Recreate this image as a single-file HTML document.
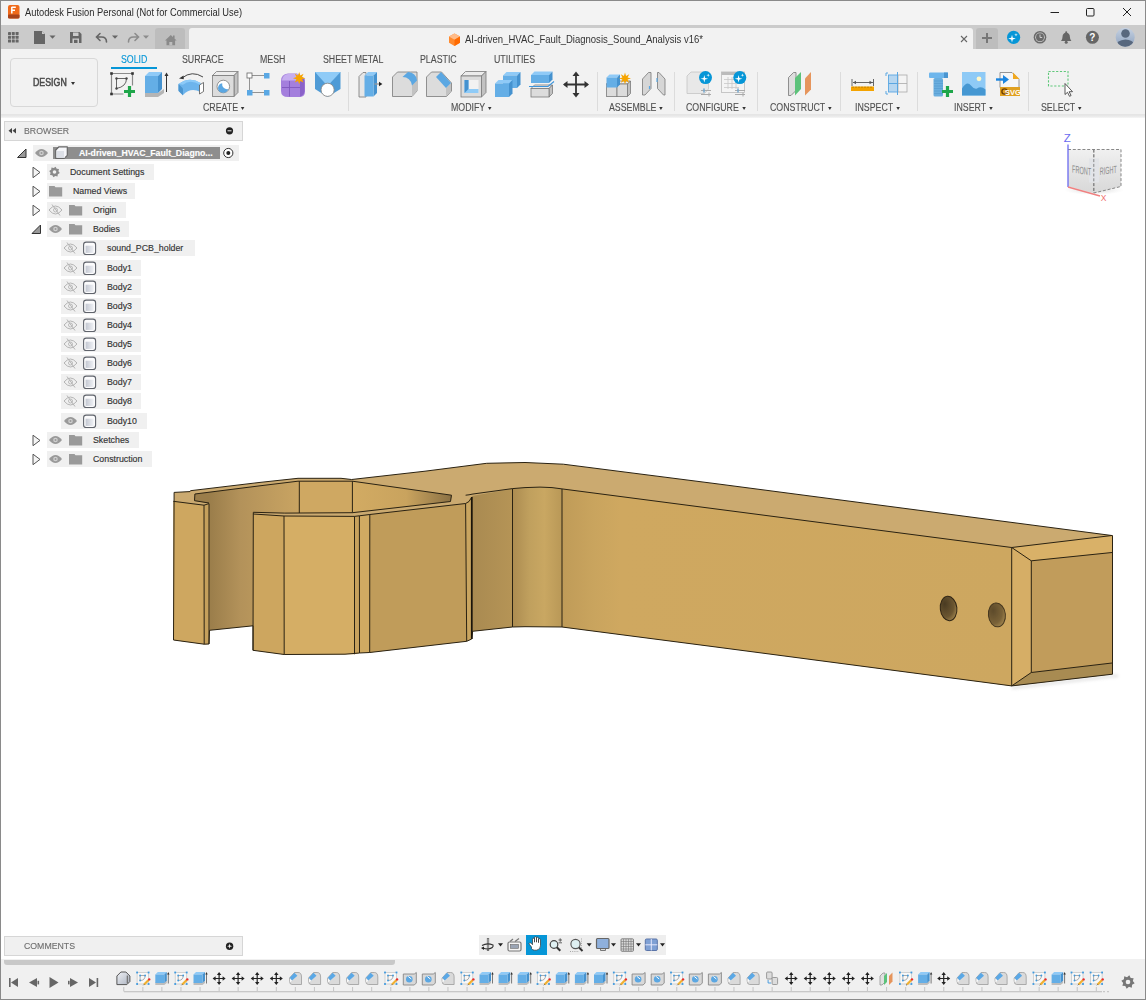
<!DOCTYPE html>
<html><head><meta charset="utf-8">
<style>
*{box-sizing:border-box;margin:0;padding:0}
html,body{width:1146px;height:1000px;overflow:hidden;background:#fff;font-family:"Liberation Sans",sans-serif}
.a{position:absolute}
#frame{position:absolute;left:0;top:0;width:1146px;height:1000px;border:1px solid #8a8a8a;pointer-events:none;z-index:50}
#title{left:0;top:0;width:1146px;height:25px;background:#f3f3f3}
#tabbar{left:0;top:25px;width:1146px;height:24px;background:#cbcbcb}
#toolbar{left:0;top:49px;width:1146px;height:69px;background:linear-gradient(to bottom,#f2f2f2 0,#f2f2f2 65px,#e4e4e4 65px,#e8e8e8 67px,#f6f6f6 69px)}
.lbl{position:absolute;font-size:10px;transform:scaleX(0.88);transform-origin:0 0;color:#505050;white-space:nowrap;line-height:10px;-webkit-text-stroke:0.12px currentColor}
.tab{position:absolute;font-size:10px;transform:scaleX(0.88);transform-origin:0 0;color:#505050;white-space:nowrap;line-height:10px;top:55px;-webkit-text-stroke:0.12px currentColor}
.sep{position:absolute;top:72px;width:1px;height:39px;background:#dcdcdc}
.dd{display:inline-block;width:0;height:0;border-left:2.9px solid transparent;border-right:2.9px solid transparent;border-top:3.2px solid #333;margin-left:3.5px;position:relative;top:-1.5px;-webkit-text-stroke:0}
.row{position:absolute;height:16px;background:#f0f0f0}
.rt{position:absolute;font-size:8.8px;color:#333;white-space:nowrap;line-height:10px;-webkit-text-stroke:0.15px currentColor}
.tri{position:absolute;width:10px;height:12px}
</style></head><body>
<div id="frame"></div>
<!-- title bar -->
<div class="a" id="title"></div>
<div class="a" style="left:25px;top:6.5px;font-size:10.3px;transform:scaleX(0.905);transform-origin:0 0;color:#2a2a2a;white-space:nowrap;line-height:12px">Autodesk Fusion Personal (Not for Commercial Use)</div>
<!-- tab bar -->
<div class="a" id="tabbar"></div>
<div class="a" style="left:155px;top:28px;width:30px;height:21px;background:#bdbdbd;border-radius:3px 3px 0 0"></div>
<div class="a" style="left:189px;top:28px;width:784px;height:21px;background:#f2f2f2;border-radius:3px 3px 0 0"></div>
<div class="a" style="left:976px;top:28px;width:22px;height:21px;background:#bdbdbd;border-radius:3px 3px 0 0"></div>
<div class="a" style="left:465px;top:34px;font-size:10.3px;transform:scaleX(0.925);transform-origin:0 0;color:#333;white-space:nowrap;line-height:12px">AI-driven_HVAC_Fault_Diagnosis_Sound_Analysis v16*</div>
<!-- toolbar -->
<div class="a" id="toolbar"></div>
<div class="a" style="left:10px;top:58px;width:88px;height:49px;border:1px solid #d8d8d8;border-radius:4px;background:#f2f2f2"></div>
<div class="lbl" style="left:33.3px;top:78px;color:#4a4a4a;-webkit-text-stroke:0.5px #4a4a4a;">DESIGN</div><div class="a" style="left:71px;top:81.5px;width:0;height:0;border-left:2.5px solid transparent;border-right:2.5px solid transparent;border-top:3.5px solid #333"></div>
<div class="tab" style="left:121px;color:#0696d7">SOLID</div>
<div class="a" style="left:111px;top:67px;width:46px;height:2px;background:#0696d7"></div>
<div class="tab" style="left:182px">SURFACE</div>
<div class="tab" style="left:260px">MESH</div>
<div class="tab" style="left:323px">SHEET METAL</div>
<div class="tab" style="left:420px">PLASTIC</div>
<div class="tab" style="left:494px">UTILITIES</div>
<div class="lbl" style="left:203px;top:103px">CREATE<span class="dd"></span></div>
<div class="lbl" style="left:451px;top:103px">MODIFY<span class="dd"></span></div>
<div class="lbl" style="left:609px;top:103px">ASSEMBLE<span class="dd"></span></div>
<div class="lbl" style="left:686px;top:103px">CONFIGURE<span class="dd"></span></div>
<div class="lbl" style="left:770px;top:103px">CONSTRUCT<span class="dd"></span></div>
<div class="lbl" style="left:855px;top:103px">INSPECT<span class="dd"></span></div>
<div class="lbl" style="left:954px;top:103px">INSERT<span class="dd"></span></div>
<div class="lbl" style="left:1041px;top:103px">SELECT<span class="dd"></span></div>
<div class="sep" style="left:348px"></div>
<div class="sep" style="left:597px"></div>
<div class="sep" style="left:674px"></div>
<div class="sep" style="left:757px"></div>
<div class="sep" style="left:840px"></div>
<div class="sep" style="left:917px"></div>
<div class="sep" style="left:1028px"></div>
<svg class="a" style="left:0;top:0;z-index:5" width="1146" height="120" viewBox="0 0 1146 120">
<rect x="8" y="5" width="11.5" height="13.5" rx="2" fill="#f06a1a"/>
<rect x="8" y="14.5" width="11.5" height="4" rx="1" fill="#a8431a"/>
<path d="M11.6,7.2 h4.2 M11.8,7 v6.6 M11.8,10.2 h3.2" stroke="#fff" stroke-width="1.5" fill="none"/>
<path d="M1050.5,12.5 h8.5" stroke="#222" stroke-width="1"/>
<rect x="1086.5" y="8.5" width="7.5" height="7.5" rx="1" fill="none" stroke="#222" stroke-width="1"/>
<path d="M1123,8 l8,8 M1131,8 l-8,8" stroke="#222" stroke-width="1"/>
<rect x="8.0" y="32.0" width="3" height="3" rx="0.4" fill="#666"/>
<rect x="8.0" y="35.8" width="3" height="3" rx="0.4" fill="#666"/>
<rect x="8.0" y="39.6" width="3" height="3" rx="0.4" fill="#666"/>
<rect x="11.8" y="32.0" width="3" height="3" rx="0.4" fill="#666"/>
<rect x="11.8" y="35.8" width="3" height="3" rx="0.4" fill="#666"/>
<rect x="11.8" y="39.6" width="3" height="3" rx="0.4" fill="#666"/>
<rect x="15.6" y="32.0" width="3" height="3" rx="0.4" fill="#666"/>
<rect x="15.6" y="35.8" width="3" height="3" rx="0.4" fill="#666"/>
<rect x="15.6" y="39.6" width="3" height="3" rx="0.4" fill="#666"/>
<path d="M34,31 h8 l3,3 v10 h-11 z" fill="#666"/><path d="M42,31 v3 h3" fill="#cbcbcb"/>
<path d="M49.5,35.5 h6 l-3,3.2 z" fill="#666"/>
<path d="M70,32 h9.5 l2,2 v9 h-11.5 z" fill="#666"/><rect x="73" y="32.5" width="5.5" height="3.5" fill="#cbcbcb"/><rect x="72.5" y="38.5" width="6.5" height="4.5" fill="#cbcbcb"/><rect x="74" y="39.8" width="3.5" height="3.2" fill="#666"/>
<path d="M106.5,42 q0,-5 -5,-5 h-4.5 M100,33.5 l-3.5,3.5 l3.5,3.5" stroke="#666" stroke-width="1.6" fill="none" stroke-linecap="round"/>
<path d="M112,35.5 h6 l-3,3.2 z" fill="#666"/>
<path d="M128.5,42 q0,-5 5,-5 h4.5 M135,33.5 l3.5,3.5 l-3.5,3.5" stroke="#8c8c8c" stroke-width="1.6" fill="none" stroke-linecap="round"/>
<path d="M143,35.5 h6 l-3,3.2 z" fill="#8c8c8c"/>
<path d="M165,40.5 l5.8,-5.5 l5.8,5.5 h-1.5 v4.8 h-8.6 v-4.8 z" fill="#8a8a8a"/><rect x="173" y="35.5" width="1.6" height="3" fill="#8a8a8a"/><rect x="169.3" y="42" width="3" height="3.3" fill="#bdbdbd"/>
<polygon points="454.5,33.5 460,36.6 460,42.8 454.5,46 449,42.8 449,36.6" fill="#ff8a2e"/>
<polygon points="454.5,33.5 460,36.6 454.5,39.7 449,36.6" fill="#ffbb88"/>
<polygon points="460,36.6 460,42.8 454.5,46 454.5,39.7" fill="#ff6a00"/>
<path d="M961,36 l6,6 M967,36 l-6,6" stroke="#666" stroke-width="1.1"/>
<path d="M987,33 v10 M982,38 h10" stroke="#777" stroke-width="2"/>
<circle cx="1013.6" cy="37.3" r="6.6" fill="#0696d7"/>
<polygon points="1012.00,34.80 1012.78,37.82 1015.80,38.60 1012.78,39.38 1012.00,42.40 1011.22,39.38 1008.20,38.60 1011.22,37.82" fill="#fff"/><polygon points="1016.00,33.00 1016.39,34.41 1017.80,34.80 1016.39,35.19 1016.00,36.60 1015.61,35.19 1014.20,34.80 1015.61,34.41" fill="#fff"/>
<circle cx="1040" cy="37.3" r="6.3" fill="#6a6a6a"/><circle cx="1040" cy="37.3" r="4.8" fill="#cbcbcb"/><circle cx="1040" cy="37.3" r="4" fill="#6a6a6a"/><path d="M1040,34.5 v3 h2.2" stroke="#cbcbcb" stroke-width="1" fill="none"/>
<path d="M1061,41 q1.5,-1.5 1.5,-4 q0,-4 3.7,-4.6 q3.7,0.6 3.7,4.6 q0,2.5 1.5,4 z" fill="#666"/><circle cx="1066.2" cy="32.3" r="1" fill="#666"/><circle cx="1066.2" cy="42.3" r="1.5" fill="#666"/>
<circle cx="1092.4" cy="37.3" r="6.5" fill="#666"/><text x="1092.4" y="41.3" font-size="10" font-weight="bold" fill="#fff" text-anchor="middle" font-family="Liberation Sans">?</text>
<defs><linearGradient id="gAv" x1="0" y1="0" x2="0" y2="1"><stop offset="0" stop-color="#c6d2e2"/><stop offset="1" stop-color="#8fa3c0"/></linearGradient><clipPath id="cAv"><circle cx="1125.2" cy="37.2" r="9.5"/></clipPath></defs>
<circle cx="1125.2" cy="37.2" r="9.5" fill="url(#gAv)"/><g clip-path="url(#cAv)"><circle cx="1125.5" cy="33.5" r="4.3" fill="#58687e"/><path d="M1115,48 q1,-8 10.5,-8.5 q9.5,0.5 10.5,8.5 z" fill="#58687e"/></g>
<path d="M111.5,73.5 h21 v12 M111.5,73.5 v20.5 h12" stroke="#8a8a8a" stroke-width="1.2" fill="none"/>
<rect x="110.2" y="72.2" width="2.6" height="2.6" fill="#333"/>
<rect x="131.2" y="72.2" width="2.6" height="2.6" fill="#333"/>
<rect x="110.2" y="92.7" width="2.6" height="2.6" fill="#333"/>
<path d="M116.5,78.5 h10 M116.5,78.5 v10 M126.5,78.5 q0,8 -10,10" stroke="#555" stroke-width="0.9" fill="none"/>
<circle cx="116.5" cy="78.5" r="1.2" fill="#444"/>
<circle cx="126.5" cy="78.5" r="1.2" fill="#444"/>
<circle cx="116.5" cy="88.5" r="1.2" fill="#444"/>
<path d="M129.5,86 v11 M124,91.5 h11" stroke="#1ea64a" stroke-width="3.2"/>
<polygon points="145,93 158,93 164,89 164,93 158,97 145,97" fill="#b5b5b5"/>
<polygon points="145,76 149,72 162,72 158,76" fill="#8fcaf7"/><polygon points="158,76 162,72 162,89 158,93" fill="#4592cf"/><rect x="145" y="76" width="13" height="17" fill="#64aee6"/>
<path d="M166.5,92 v-18" stroke="#333" stroke-width="1"/><path d="M164.5,76 l2,-3.5 l2,3.5 z" fill="#333"/>
<path d="M182,78 q10,-8 21,-1" stroke="#333" stroke-width="0.9" fill="none"/><path d="M179,78.5 l4.5,-3 l0.3,3.8 z" fill="#333"/>
<path d="M178.5,84 q11,-8 22,-1 v9 q-10,-5 -17.5,3 l-4.5,-4.5 z" fill="#6db4ec"/>
<path d="M178.5,84 q11,-8 22,-1 l-0.5,1.8 q-10,-6 -17,0 z" fill="#8ccaf8"/>
<path d="M178.5,84 l4.5,4.5 v7 l-4.5,-4.5 z" fill="#4a95d0"/>
<polygon points="199.5,85 203.5,82.5 203.5,91.5 199.5,94" fill="#fff" stroke="#555" stroke-width="0.8"/>
<polygon points="212.5,75.5 216.5,71.5 238.0,71.5 234.0,75.5" fill="#ececec" stroke="#7a7a7a" stroke-width="0.8"/><polygon points="234.0,75.5 238.0,71.5 238.0,92.5 234.0,96.5" fill="#c2c2c2" stroke="#7a7a7a" stroke-width="0.8"/><rect x="212.5" y="75.5" width="21.5" height="21" fill="#dcdcdc" stroke="#7a7a7a" stroke-width="0.8"/>
<circle cx="223.3" cy="86.5" r="6.3" fill="#fff" stroke="#888" stroke-width="0.9"/><path d="M218,88 a5.2,5.2 0 0 0 10.2,1 a5,5 0 0 1 -6,-5.8 a5.2,5.2 0 0 0 -4.2,4.8 z" fill="#5ba7e2"/>
<path d="M252,75.5 h12 M249.5,78 v12 M252,92.5 h12" stroke="#888" stroke-width="0.9"/>
<rect x="247" y="73" width="5" height="5" fill="#fff" stroke="#666" stroke-width="0.8"/>
<rect x="264" y="73" width="5.5" height="5.5" fill="#5aa8e4"/>
<rect x="247" y="90" width="5.5" height="5.5" fill="#5aa8e4"/>
<rect x="264" y="90" width="5.5" height="5.5" fill="#5aa8e4"/>
<path d="M281,81 q0,-7 7,-7.5 h9 l6,4 q2,2 2,5 v9 q0,5 -5,5.5 h-12 q-7,0 -7,-6 z" fill="#a47fdd"/>
<path d="M282,80 q1,-5.5 6,-6 h9 l5,3.5 l-5,3 h-15 z" fill="#c6aef0"/>
<path d="M300,80.5 l4.5,-2.5 v13 q0,3 -3,5 l-1.5,0.5 z" fill="#8a62c9"/>
<path d="M282,87.5 h18 M289.5,81 v15.5" stroke="#7f58bd" stroke-width="0.9"/>
<polygon points="299.20,72.00 300.35,75.43 303.58,73.82 301.97,77.05 305.40,78.20 301.97,79.35 303.58,82.58 300.35,80.97 299.20,84.40 298.05,80.97 294.82,82.58 296.43,79.35 293.00,78.20 296.43,77.05 294.82,73.82 298.05,75.43" fill="#f6a400"/>
<polygon points="315,72 340.5,72 340.5,89 327.5,97 315,89" fill="#4f9bd6"/>
<polygon points="315,72 340.5,72 327.5,86" fill="#8fcbf7"/>
<circle cx="327.6" cy="89.8" r="6.6" fill="#fff" stroke="#8a8a8a" stroke-width="0.9"/>
<path d="M359,97 v-20.5 l4,-4 h3 v24.5 z" fill="#e6e6e6" stroke="#777" stroke-width="0.8"/>
<polygon points="364.5,75.5 368.0,72 377.0,72 373.5,75.5" fill="#8fcaf7"/><polygon points="373.5,75.5 377.0,72 377.0,93 373.5,96.5" fill="#4592cf"/><rect x="364.5" y="75.5" width="9" height="21" fill="#64aee6"/>
<path d="M374.5,84 h5" stroke="#999" stroke-width="1.3"/><path d="M379,81.8 l3.4,2.2 l-3.4,2.2 z" fill="#222"/>
<path d="M392.5,96.5 v-19.5 l5,-5 h13 v0 l6.5,0 v19 l-5,5.5 z" fill="#dcdcdc" stroke="#7a7a7a" stroke-width="0.8"/>
<polygon points="412,96.5 417,91 417,80 412,85" fill="#c2c2c2"/>
<path d="M402.5,77 q8,0 9.5,8.5 l5,-5 q-1,-8 -9,-8.5 z" fill="#5ba7e2"/>
<path d="M426.5,96.5 v-19.5 l5,-5 h10 l10,11 v8 l-5,5.5 z" fill="#dcdcdc" stroke="#7a7a7a" stroke-width="0.8"/>
<polygon points="446,96.5 451,91 451,83 446,88" fill="#c2c2c2"/>
<polygon points="436,77 441,72 451,83 446,88" fill="#5ba7e2"/>
<polygon points="461,76.0 465.5,71.5 486.0,71.5 481.5,76.0" fill="#ececec" stroke="#7a7a7a" stroke-width="0.8"/><polygon points="481.5,76.0 486.0,71.5 486.0,92.5 481.5,97.0" fill="#c2c2c2" stroke="#7a7a7a" stroke-width="0.8"/><rect x="461" y="76.0" width="20.5" height="21" fill="#dcdcdc" stroke="#7a7a7a" stroke-width="0.8"/>
<rect x="464.5" y="80" width="14" height="13" fill="#f2f2f2"/>
<polygon points="464.5,80 468.5,80 468.5,89 478.5,89 478.5,93 464.5,93" fill="#8fcbf7"/><polygon points="464.5,80 468.5,80 468.5,89 464.5,93" fill="#4592cf"/>
<polygon points="503,75.5 506.5,72 520.5,72 517,75.5" fill="#8fcaf7"/><polygon points="517,75.5 520.5,72 520.5,84.5 517,88.0" fill="#4592cf"/><rect x="503" y="75.5" width="14" height="12.5" fill="#64aee6"/>
<polygon points="495,83.5 498.5,80 512.5,80 509,83.5" fill="#8fcaf7"/><polygon points="509,83.5 512.5,80 512.5,93.5 509,97.0" fill="#4592cf"/><rect x="495" y="83.5" width="14" height="13.5" fill="#64aee6"/>
<polygon points="531,75.0 534.5,71.5 552.5,71.5 549,75.0" fill="#8fcaf7"/><polygon points="549,75.0 552.5,71.5 552.5,79.5 549,83.0" fill="#4592cf"/><rect x="531" y="75.0" width="18" height="8" fill="#64aee6"/>
<polygon points="531,88.5 534.5,85 552.5,85 549,88.5" fill="#ececec" stroke="#7a7a7a" stroke-width="0.8"/><polygon points="549,88.5 552.5,85 552.5,93.5 549,97.0" fill="#c2c2c2" stroke="#7a7a7a" stroke-width="0.8"/><rect x="531" y="88.5" width="18" height="8.5" fill="#dcdcdc" stroke="#7a7a7a" stroke-width="0.8"/>
<path d="M529,86.5 h19 l6,-5" stroke="#3d95dc" stroke-width="1.1" fill="none"/>
<path d="M576,73 v23 M564.5,84.5 h23" stroke="#333" stroke-width="1.8"/>
<polygon points="576,71.5 572.5,76 579.5,76" fill="#333"/>
<polygon points="576,97.5 572.5,93 579.5,93" fill="#333"/>
<polygon points="563,84.5 567.5,81 567.5,88" fill="#333"/>
<polygon points="589,84.5 584.5,81 584.5,88" fill="#333"/>
<polygon points="606.5,84 609.5,81 620.0,81 617.0,84" fill="#ececec" stroke="#7a7a7a" stroke-width="0.8"/><polygon points="617.0,84 620.0,81 620.0,93.5 617.0,96.5" fill="#c2c2c2" stroke="#7a7a7a" stroke-width="0.8"/><rect x="606.5" y="84" width="10.5" height="12.5" fill="#dcdcdc" stroke="#7a7a7a" stroke-width="0.8"/>
<polygon points="617,84 620,81 630.5,81 627.5,84" fill="#ececec" stroke="#7a7a7a" stroke-width="0.8"/><polygon points="627.5,84 630.5,81 630.5,93.5 627.5,96.5" fill="#c2c2c2" stroke="#7a7a7a" stroke-width="0.8"/><rect x="617" y="84" width="10.5" height="12.5" fill="#dcdcdc" stroke="#7a7a7a" stroke-width="0.8"/>
<polygon points="606.5,77.5 609.5,74.5 620.0,74.5 617.0,77.5" fill="#8fcaf7"/><polygon points="617.0,77.5 620.0,74.5 620.0,84.5 617.0,87.5" fill="#4592cf"/><rect x="606.5" y="77.5" width="10.5" height="10" fill="#64aee6"/>
<polygon points="625.00,72.50 626.07,75.91 629.24,74.26 627.59,77.43 631.00,78.50 627.59,79.57 629.24,82.74 626.07,81.09 625.00,84.50 623.93,81.09 620.76,82.74 622.41,79.57 619.00,78.50 622.41,77.43 620.76,74.26 623.93,75.91" fill="#f6a400"/>
<path d="M642.5,95 v-16 l6,-6.5 h2.5 v16 l-6,6.5 z" fill="#d6d6d6" stroke="#777" stroke-width="0.8"/>
<path d="M665,95 v-16 l-6,-6.5 h-1.5 v16 l6,6.5 z" fill="#d6d6d6" stroke="#777" stroke-width="0.8"/>
<path d="M649.5,86 v3 M657,78 v4" stroke="#5ba7e2" stroke-width="1.2"/>
<path d="M687,93.5 v-17.5 l4,-4 h17.5 v17 l-4,4.5 z" fill="#e8e8e8" stroke="#c4c4c4" stroke-width="0.8"/>
<path d="M701,90.5 h10 M701,94.5 h10 M704,88.5 v4 M709,92.5 v4" stroke="#aaa" stroke-width="1"/><path d="M704,88.5 v4" stroke="#5ba7e2" stroke-width="1"/>
<circle cx="705.5" cy="77.6" r="6.5" fill="#0696d7"/><polygon points="704.30,75.00 705.08,78.02 708.10,78.80 705.08,79.58 704.30,82.60 703.52,79.58 700.50,78.80 703.52,78.02" fill="#fff"/><polygon points="708.20,73.40 708.59,74.81 710.00,75.20 708.59,75.59 708.20,77.00 707.81,75.59 706.40,75.20 707.81,74.81" fill="#fff"/>
<rect x="721.5" y="72" width="23" height="20.5" fill="#f4f4f4" stroke="#bbb" stroke-width="0.8"/><rect x="721.5" y="72" width="23" height="3" fill="#bbb"/>
<path d="M724,79.5 h15 M724,83.5 h15 M724,87.5 h15 M728,77 v12 M732,77 v12 M736,77 v12" stroke="#c8c8c8" stroke-width="0.8"/>
<path d="M735,90.5 h10 M735,94.5 h10 M738,88.5 v4 M743,92.5 v4" stroke="#aaa" stroke-width="1"/><path d="M738,88.5 v4" stroke="#5ba7e2" stroke-width="1"/>
<circle cx="739.8" cy="77.6" r="6.5" fill="#0696d7"/><polygon points="738.60,75.00 739.38,78.02 742.40,78.80 739.38,79.58 738.60,82.60 737.82,79.58 734.80,78.80 737.82,78.02" fill="#fff"/><polygon points="742.50,73.40 742.89,74.81 744.30,75.20 742.89,75.59 742.50,77.00 742.11,75.59 740.70,75.20 742.11,74.81" fill="#fff"/>
<path d="M788.5,95.5 v-18 l5,-5 h2.5 v18 l-5,5 z" fill="#dedede" stroke="#777" stroke-width="0.8"/>
<polygon points="795,78 801,72 801,89 795,95.5" fill="#5cc27a"/>
<polygon points="805,78.5 811,72 811,89.5 805,95.5" fill="#e6955c"/>
<path d="M852,79 v7 M873.5,79 v7 M853,82.5 h20" stroke="#555" stroke-width="0.9"/><path d="M853,82.5 l3,-1.8 v3.6 z M872.5,82.5 l-3,-1.8 v3.6 z" fill="#555"/>
<rect x="851" y="86.5" width="23" height="4.5" fill="#f4a300"/><path d="M853,86.5 v1.5 M856,86.5 v1.5 M859,86.5 v1.5 M862,86.5 v1.5 M865,86.5 v1.5 M868,86.5 v1.5 M871,86.5 v1.5" stroke="#a46a00" stroke-width="0.7"/>
<rect x="898" y="75" width="9" height="17" fill="#f4f4f4" stroke="#aaa" stroke-width="0.8"/><path d="M898,83.5 h9" stroke="#aaa" stroke-width="0.8"/>
<rect x="888.5" y="75" width="9" height="17" fill="#b6d6f0" stroke="#5ba7e2" stroke-width="0.9"/><path d="M888.5,83.5 h9 M897.5,72 v23" stroke="#5ba7e2" stroke-width="1"/>
<path d="M888,73 h-2 v3 M888,94 h-2 v-3" stroke="#5ba7e2" stroke-width="1" fill="none"/>
<rect x="929" y="72.5" width="19" height="5.5" rx="1" fill="#6eb6ec"/><rect x="944" y="72.5" width="4" height="5.5" fill="#4a95d0"/>
<rect x="933.5" y="78" width="9.5" height="18.5" rx="1.5" fill="#6aaede"/><path d="M934,81 h9 M934,83.5 h9 M934,86 h9 M934,88.5 h9 M934,91 h9 M934,93.5 h9" stroke="#5399cf" stroke-width="0.6"/>
<path d="M947.5,86 v11 M942,91.5 h11" stroke="#1ea64a" stroke-width="3.2"/>
<rect x="962" y="72" width="23.5" height="23.5" fill="#8ecaf6"/><path d="M962,95.5 v-7 q5,-8 9,-3 q3,4 6,3 q4,-3 8.5,1 v6 z" fill="#4597d2"/><circle cx="979" cy="78.8" r="2.4" fill="#fff7c8"/>
<path d="M1000,72.5 h12 l7,7 v8 h-19 z" fill="#f6f6f6" stroke="#8a8a8a" stroke-width="0.9"/><polygon points="1013,72.5 1019.5,79 1013,79" fill="#f0a820"/>
<rect x="1000" y="87" width="20" height="9" fill="#e0a020"/><circle cx="1004.5" cy="91.5" r="2.6" fill="none" stroke="#704000" stroke-width="1.4"/><text x="1013" y="95" font-size="7.5" font-weight="bold" fill="#fff" text-anchor="middle" font-family="Liberation Sans">SVG</text>
<path d="M996,79.5 h8" stroke="#1c86e0" stroke-width="2.4"/><polygon points="1003,75 1009,79.5 1003,84" fill="#1c86e0"/>
<rect x="1048.5" y="71.5" width="19.5" height="14.5" fill="none" stroke="#5fc87a" stroke-width="1.1" stroke-dasharray="2.2,1.6"/>
<path d="M1065,83.5 v11 l2.5,-2.2 l2,4 l1.6,-0.8 l-2,-3.8 h3.4 z" fill="#fff" stroke="#333" stroke-width="0.8"/>
</svg>
<!-- browser -->
<div class="a" style="left:4px;top:121px;width:239px;height:20px;background:#f0f0f0;border:1px solid #d6d6d6"></div>
<div class="lbl" style="left:24px;top:125.5px;color:#6e6e6e;font-size:9.3px;transform:scaleX(0.94)">BROWSER</div>
<div class="row" style="left:33px;top:145px;width:206px;height:16px"></div>
<div class="a" style="left:53px;top:146.5px;width:167px;height:12.5px;background:#8e8e8e"></div>
<div class="rt" style="left:79px;top:147.5px;color:#fff;font-weight:bold;font-size:8.7px">AI-driven_HVAC_Fault_Diagno...</div>
<div class="row" style="left:47px;top:164px;height:16px;width:107px"></div>
<div class="rt" style="left:70px;top:166.5px">Document Settings</div>
<div class="row" style="left:47px;top:183px;height:16px;width:88px"></div>
<div class="rt" style="left:73px;top:185.5px">Named Views</div>
<div class="row" style="left:47px;top:202px;height:16px;width:79px"></div>
<div class="rt" style="left:93px;top:204.5px">Origin</div>
<div class="row" style="left:47px;top:221px;height:16px;width:82px"></div>
<div class="rt" style="left:93px;top:223.5px">Bodies</div>
<div class="row" style="left:61px;top:240px;height:16px;width:134px"></div>
<div class="rt" style="left:107px;top:242.5px">sound_PCB_holder</div>
<div class="row" style="left:61px;top:260px;height:16px;width:80px"></div>
<div class="rt" style="left:107px;top:262.5px">Body1</div>
<div class="row" style="left:61px;top:279px;height:16px;width:80px"></div>
<div class="rt" style="left:107px;top:281.5px">Body2</div>
<div class="row" style="left:61px;top:298px;height:16px;width:80px"></div>
<div class="rt" style="left:107px;top:300.5px">Body3</div>
<div class="row" style="left:61px;top:317px;height:16px;width:80px"></div>
<div class="rt" style="left:107px;top:319.5px">Body4</div>
<div class="row" style="left:61px;top:336px;height:16px;width:80px"></div>
<div class="rt" style="left:107px;top:338.5px">Body5</div>
<div class="row" style="left:61px;top:355px;height:16px;width:80px"></div>
<div class="rt" style="left:107px;top:357.5px">Body6</div>
<div class="row" style="left:61px;top:374px;height:16px;width:80px"></div>
<div class="rt" style="left:107px;top:376.5px">Body7</div>
<div class="row" style="left:61px;top:393px;height:16px;width:80px"></div>
<div class="rt" style="left:107px;top:395.5px">Body8</div>
<div class="row" style="left:61px;top:413px;height:16px;width:86px"></div>
<div class="rt" style="left:107px;top:415.5px">Body10</div>
<div class="row" style="left:47px;top:432px;height:16px;width:92px"></div>
<div class="rt" style="left:93px;top:434.5px">Sketches</div>
<div class="row" style="left:47px;top:451px;height:16px;width:105px"></div>
<div class="rt" style="left:93px;top:453.5px">Construction</div>
<svg class="a" style="left:0;top:0;z-index:6" width="250" height="470" viewBox="0 0 250 470">
<defs><linearGradient id="gBody" x1="0" y1="0" x2="1" y2="0"><stop offset="0" stop-color="#c4c8d2"/><stop offset="1" stop-color="#eef0f4"/></linearGradient></defs>
<circle cx="229.5" cy="130.8" r="3.6" fill="#222"/><path d="M227.5,130.8 h4" stroke="#f0f0f0" stroke-width="1"/>
<path d="M12,128 l-3.5,2.8 l3.5,2.8 z M16,128 l-3.5,2.8 l3.5,2.8 z" fill="#444"/>
<path d="M17.5,157.5 l8.5,-8.5 v8.5 z" fill="#9a9a9a" stroke="#333" stroke-width="1" stroke-linejoin="round"/>
<path d="M35,153.0 q6.5,-8 13,0 q-6.5,8 -13,0 z" fill="#9a9a9a"/><circle cx="41.5" cy="153.0" r="2.3" fill="#cfcfcf"/><circle cx="41.5" cy="153.0" r="1" fill="#9a9a9a"/>
<path d="M55.7,150 L59,146.8 H67.3 V155.3 L64.2,158.4 H55.7 Z" fill="#f6f7fa" stroke="#666" stroke-width="1.2" stroke-linejoin="round"/><rect x="56.6" y="151" width="7.4" height="6.8" fill="#dde0e7"/><path d="M64.6,150.6 v7.3" stroke="#f4f4f8" stroke-width="0.8"/>
<circle cx="228.3" cy="153" r="4.6" fill="#fff" stroke="#333" stroke-width="1"/><circle cx="228.3" cy="153" r="2" fill="#222"/>
<path d="M33.0,167.2 l7,5.2 l-7,5.3 z" fill="#f4f4f4" stroke="#555" stroke-width="1" stroke-linejoin="round"/>
<polygon points="59.80,173.05 57.83,174.22 57.50,176.49 55.28,175.92 53.45,177.30 52.28,175.33 50.01,175.00 50.58,172.78 49.20,170.95 51.17,169.78 51.50,167.51 53.72,168.08 55.55,166.70 56.72,168.67 58.99,169.00 58.42,171.22" fill="#8a8a8a"/><circle cx="54.5" cy="172.0" r="1.8" fill="#f0f0f0"/>
<path d="M33.0,186.2 l7,5.2 l-7,5.3 z" fill="#f4f4f4" stroke="#555" stroke-width="1" stroke-linejoin="round"/>
<path d="M49,186 h5.5 l1,1.2 h6.7 v9.2 h-13.2 z" fill="#9a9a9a"/><path d="M55,186.3 h7" stroke="#f0f0f0" stroke-width="0.6"/>
<path d="M33.0,205.2 l7,5.2 l-7,5.3 z" fill="#f4f4f4" stroke="#555" stroke-width="1" stroke-linejoin="round"/>
<path d="M49,210.0 q6.5,-8 13,0 q-6.5,8 -13,0 z" fill="none" stroke="#b4b4b4" stroke-width="1"/><circle cx="55.5" cy="210.0" r="2" fill="none" stroke="#b4b4b4" stroke-width="0.9"/><path d="M52,204.5 l8,11" stroke="#b4b4b4" stroke-width="1"/>
<path d="M69,205 h5.5 l1,1.2 h6.7 v9.2 h-13.2 z" fill="#9a9a9a"/><path d="M75,205.3 h7" stroke="#f0f0f0" stroke-width="0.6"/>
<path d="M32,233.5 l8.5,-8.5 v8.5 z" fill="#9a9a9a" stroke="#333" stroke-width="1" stroke-linejoin="round"/>
<path d="M49,229.0 q6.5,-8 13,0 q-6.5,8 -13,0 z" fill="#9a9a9a"/><circle cx="55.5" cy="229.0" r="2.3" fill="#cfcfcf"/><circle cx="55.5" cy="229.0" r="1" fill="#9a9a9a"/>
<path d="M69,224 h5.5 l1,1.2 h6.7 v9.2 h-13.2 z" fill="#9a9a9a"/><path d="M75,224.3 h7" stroke="#f0f0f0" stroke-width="0.6"/>
<path d="M64,248.0 q6.5,-8 13,0 q-6.5,8 -13,0 z" fill="none" stroke="#b4b4b4" stroke-width="1"/><circle cx="70.5" cy="248.0" r="2" fill="none" stroke="#b4b4b4" stroke-width="0.9"/><path d="M67,242.5 l8,11" stroke="#b4b4b4" stroke-width="1"/>
<rect x="83.6" y="242.1" width="12" height="12.4" rx="2.6" fill="#fbfbfc" stroke="#60646c" stroke-width="1.1"/><rect x="85.6" y="245.7" width="8" height="7.2" fill="url(#gBody)"/>
<path d="M64,268.0 q6.5,-8 13,0 q-6.5,8 -13,0 z" fill="none" stroke="#b4b4b4" stroke-width="1"/><circle cx="70.5" cy="268.0" r="2" fill="none" stroke="#b4b4b4" stroke-width="0.9"/><path d="M67,262.5 l8,11" stroke="#b4b4b4" stroke-width="1"/>
<rect x="83.6" y="262.1" width="12" height="12.4" rx="2.6" fill="#fbfbfc" stroke="#60646c" stroke-width="1.1"/><rect x="85.6" y="265.7" width="8" height="7.2" fill="url(#gBody)"/>
<path d="M64,287.0 q6.5,-8 13,0 q-6.5,8 -13,0 z" fill="none" stroke="#b4b4b4" stroke-width="1"/><circle cx="70.5" cy="287.0" r="2" fill="none" stroke="#b4b4b4" stroke-width="0.9"/><path d="M67,281.5 l8,11" stroke="#b4b4b4" stroke-width="1"/>
<rect x="83.6" y="281.1" width="12" height="12.4" rx="2.6" fill="#fbfbfc" stroke="#60646c" stroke-width="1.1"/><rect x="85.6" y="284.7" width="8" height="7.2" fill="url(#gBody)"/>
<path d="M64,306.0 q6.5,-8 13,0 q-6.5,8 -13,0 z" fill="none" stroke="#b4b4b4" stroke-width="1"/><circle cx="70.5" cy="306.0" r="2" fill="none" stroke="#b4b4b4" stroke-width="0.9"/><path d="M67,300.5 l8,11" stroke="#b4b4b4" stroke-width="1"/>
<rect x="83.6" y="300.1" width="12" height="12.4" rx="2.6" fill="#fbfbfc" stroke="#60646c" stroke-width="1.1"/><rect x="85.6" y="303.7" width="8" height="7.2" fill="url(#gBody)"/>
<path d="M64,325.0 q6.5,-8 13,0 q-6.5,8 -13,0 z" fill="none" stroke="#b4b4b4" stroke-width="1"/><circle cx="70.5" cy="325.0" r="2" fill="none" stroke="#b4b4b4" stroke-width="0.9"/><path d="M67,319.5 l8,11" stroke="#b4b4b4" stroke-width="1"/>
<rect x="83.6" y="319.1" width="12" height="12.4" rx="2.6" fill="#fbfbfc" stroke="#60646c" stroke-width="1.1"/><rect x="85.6" y="322.7" width="8" height="7.2" fill="url(#gBody)"/>
<path d="M64,344.0 q6.5,-8 13,0 q-6.5,8 -13,0 z" fill="none" stroke="#b4b4b4" stroke-width="1"/><circle cx="70.5" cy="344.0" r="2" fill="none" stroke="#b4b4b4" stroke-width="0.9"/><path d="M67,338.5 l8,11" stroke="#b4b4b4" stroke-width="1"/>
<rect x="83.6" y="338.1" width="12" height="12.4" rx="2.6" fill="#fbfbfc" stroke="#60646c" stroke-width="1.1"/><rect x="85.6" y="341.7" width="8" height="7.2" fill="url(#gBody)"/>
<path d="M64,363.0 q6.5,-8 13,0 q-6.5,8 -13,0 z" fill="none" stroke="#b4b4b4" stroke-width="1"/><circle cx="70.5" cy="363.0" r="2" fill="none" stroke="#b4b4b4" stroke-width="0.9"/><path d="M67,357.5 l8,11" stroke="#b4b4b4" stroke-width="1"/>
<rect x="83.6" y="357.1" width="12" height="12.4" rx="2.6" fill="#fbfbfc" stroke="#60646c" stroke-width="1.1"/><rect x="85.6" y="360.7" width="8" height="7.2" fill="url(#gBody)"/>
<path d="M64,382.0 q6.5,-8 13,0 q-6.5,8 -13,0 z" fill="none" stroke="#b4b4b4" stroke-width="1"/><circle cx="70.5" cy="382.0" r="2" fill="none" stroke="#b4b4b4" stroke-width="0.9"/><path d="M67,376.5 l8,11" stroke="#b4b4b4" stroke-width="1"/>
<rect x="83.6" y="376.1" width="12" height="12.4" rx="2.6" fill="#fbfbfc" stroke="#60646c" stroke-width="1.1"/><rect x="85.6" y="379.7" width="8" height="7.2" fill="url(#gBody)"/>
<path d="M64,401.0 q6.5,-8 13,0 q-6.5,8 -13,0 z" fill="none" stroke="#b4b4b4" stroke-width="1"/><circle cx="70.5" cy="401.0" r="2" fill="none" stroke="#b4b4b4" stroke-width="0.9"/><path d="M67,395.5 l8,11" stroke="#b4b4b4" stroke-width="1"/>
<rect x="83.6" y="395.1" width="12" height="12.4" rx="2.6" fill="#fbfbfc" stroke="#60646c" stroke-width="1.1"/><rect x="85.6" y="398.7" width="8" height="7.2" fill="url(#gBody)"/>
<path d="M64,421.0 q6.5,-8 13,0 q-6.5,8 -13,0 z" fill="#9a9a9a"/><circle cx="70.5" cy="421.0" r="2.3" fill="#cfcfcf"/><circle cx="70.5" cy="421.0" r="1" fill="#9a9a9a"/>
<rect x="83.6" y="415.1" width="12" height="12.4" rx="2.6" fill="#fbfbfc" stroke="#60646c" stroke-width="1.1"/><rect x="85.6" y="418.7" width="8" height="7.2" fill="url(#gBody)"/>
<path d="M33.0,435.2 l7,5.2 l-7,5.3 z" fill="#f4f4f4" stroke="#555" stroke-width="1" stroke-linejoin="round"/>
<path d="M49,440.0 q6.5,-8 13,0 q-6.5,8 -13,0 z" fill="#9a9a9a"/><circle cx="55.5" cy="440.0" r="2.3" fill="#cfcfcf"/><circle cx="55.5" cy="440.0" r="1" fill="#9a9a9a"/>
<path d="M69,435 h5.5 l1,1.2 h6.7 v9.2 h-13.2 z" fill="#9a9a9a"/><path d="M75,435.3 h7" stroke="#f0f0f0" stroke-width="0.6"/>
<path d="M33.0,454.2 l7,5.2 l-7,5.3 z" fill="#f4f4f4" stroke="#555" stroke-width="1" stroke-linejoin="round"/>
<path d="M49,459.0 q6.5,-8 13,0 q-6.5,8 -13,0 z" fill="#9a9a9a"/><circle cx="55.5" cy="459.0" r="2.3" fill="#cfcfcf"/><circle cx="55.5" cy="459.0" r="1" fill="#9a9a9a"/>
<path d="M69,454 h5.5 l1,1.2 h6.7 v9.2 h-13.2 z" fill="#9a9a9a"/><path d="M75,454.3 h7" stroke="#f0f0f0" stroke-width="0.6"/>
</svg>
<!-- comments -->
<div class="a" style="left:4px;top:936px;width:239px;height:20px;background:#f0f0f0;border:1px solid #d6d6d6"></div>
<div class="lbl" style="left:24px;top:940.5px;color:#6e6e6e;font-size:9.3px;transform:scaleX(0.94)">COMMENTS</div>
<!-- timeline -->
<div class="a" style="left:1px;top:959px;width:1144px;height:40px;background:#f0f0f0"></div>
<div class="a" style="left:4px;top:960px;width:391px;height:5px;background:#c8c8c8;border-radius:0 0 3px 3px"></div>
<svg class="a" style="left:0;top:930px;z-index:6" width="1146" height="70" viewBox="0 930 1146 70">
<defs><linearGradient id="gTB" x1="0" y1="0" x2="1" y2="1"><stop offset="0" stop-color="#eef0f4"/><stop offset="1" stop-color="#aeb5c2"/></linearGradient></defs>
<rect x="9" y="978" width="1.6" height="9" fill="#666"/><polygon points="11,982.5 18,978 18,987" fill="#666"/>
<polygon points="29,982.5 37,978 37,987" fill="#666"/><rect x="37.5" y="980.8" width="1.6" height="3.6" fill="#666"/>
<polygon points="49.5,977 58.5,982.5 49.5,988" fill="#666"/>
<rect x="68" y="980.8" width="1.6" height="3.6" fill="#666"/><polygon points="70,978 78,982.5 70,987" fill="#666"/>
<polygon points="89,978 96,982.5 89,987" fill="#666"/><rect x="96.6" y="978" width="1.6" height="9" fill="#666"/>
<rect x="124" y="991" width="978" height="1.3" fill="#c8c8c8"/>
<path d="M1103,991.6 h2 M1107,991.6 h2" stroke="#c8c8c8" stroke-width="1.3"/>
<rect x="123.2" y="987" width="1.1" height="4.5" fill="#c8c8c8"/>
<path d="M116.9,976.0 L120.9,972.0 H125.9 L129.9,976.0 V981.5 L126.9,984.6 H116.9 Z" fill="url(#gTB)" stroke="#555" stroke-width="1"/><path d="M127.4,975.5 v8" stroke="#777" stroke-width="1.4"/>
<rect x="142.3" y="987" width="1.1" height="4.5" fill="#c8c8c8"/>
<rect x="137.10000000000002" y="972.5" width="11.5" height="11.5" fill="#f8f8f8" stroke="#c4c4c4" stroke-width="0.7"/><rect x="136.20000000000002" y="971.6" width="1.8" height="1.8" fill="#3d9ae0"/><rect x="147.70000000000002" y="971.6" width="1.8" height="1.8" fill="#3d9ae0"/><rect x="136.20000000000002" y="983.1" width="1.8" height="1.8" fill="#3d9ae0"/><rect x="147.70000000000002" y="983.1" width="1.8" height="1.8" fill="#3d9ae0"/><path d="M140.10000000000002,975.5 h5 M140.10000000000002,975.5 v5 M145.10000000000002,975.5 q0,5 -5,5" stroke="#777" stroke-width="0.6" fill="none"/><circle cx="140.10000000000002" cy="975.5" r="0.9" fill="#3d9ae0"/><circle cx="145.10000000000002" cy="975.5" r="0.9" fill="#3d9ae0"/><circle cx="140.10000000000002" cy="980.5" r="0.9" fill="#3d9ae0"/><path d="M144.10000000000002,984.5 l4.5,-4.5" stroke="#f0b030" stroke-width="2.2"/><circle cx="149.20000000000002" cy="979.4" r="1.2" fill="#e82828"/><path d="M143.40000000000003,985.2 l0.8,-0.8" stroke="#444" stroke-width="1"/>
<rect x="161.3" y="987" width="1.1" height="4.5" fill="#c8c8c8"/>
<polygon points="155.3,982.5 164.3,982.5 166.8,980.5 166.8,983.0 164.3,985.0 155.3,985.0" fill="#bdbdbd"/><polygon points="155.3,974.5 157.8,972.0 166.8,972.0 164.3,974.5" fill="#8fcaf7"/><polygon points="164.3,974.5 166.8,972.0 166.8,980.5 164.3,983.0" fill="#4592cf"/><rect x="155.3" y="974.5" width="9" height="8.5" fill="#64aee6"/><path d="M168.3,973.5 v10" stroke="#444" stroke-width="0.7"/><polygon points="167.10000000000002,974.5 168.3,972.0 169.5,974.5" fill="#333"/>
<rect x="180.4" y="987" width="1.1" height="4.5" fill="#c8c8c8"/>
<rect x="175.20000000000002" y="972.5" width="11.5" height="11.5" fill="#f8f8f8" stroke="#c4c4c4" stroke-width="0.7"/><rect x="174.3" y="971.6" width="1.8" height="1.8" fill="#3d9ae0"/><rect x="185.8" y="971.6" width="1.8" height="1.8" fill="#3d9ae0"/><rect x="174.3" y="983.1" width="1.8" height="1.8" fill="#3d9ae0"/><rect x="185.8" y="983.1" width="1.8" height="1.8" fill="#3d9ae0"/><path d="M178.20000000000002,975.5 h5 M178.20000000000002,975.5 v5 M183.20000000000002,975.5 q0,5 -5,5" stroke="#777" stroke-width="0.6" fill="none"/><circle cx="178.20000000000002" cy="975.5" r="0.9" fill="#3d9ae0"/><circle cx="183.20000000000002" cy="975.5" r="0.9" fill="#3d9ae0"/><circle cx="178.20000000000002" cy="980.5" r="0.9" fill="#3d9ae0"/><path d="M182.20000000000002,984.5 l4.5,-4.5" stroke="#f0b030" stroke-width="2.2"/><circle cx="187.3" cy="979.4" r="1.2" fill="#e82828"/><path d="M181.50000000000003,985.2 l0.8,-0.8" stroke="#444" stroke-width="1"/>
<rect x="199.5" y="987" width="1.1" height="4.5" fill="#c8c8c8"/>
<polygon points="193.5,982.5 202.5,982.5 205.0,980.5 205.0,983.0 202.5,985.0 193.5,985.0" fill="#bdbdbd"/><polygon points="193.5,974.5 196.0,972.0 205.0,972.0 202.5,974.5" fill="#8fcaf7"/><polygon points="202.5,974.5 205.0,972.0 205.0,980.5 202.5,983.0" fill="#4592cf"/><rect x="193.5" y="974.5" width="9" height="8.5" fill="#64aee6"/><path d="M206.5,973.5 v10" stroke="#444" stroke-width="0.7"/><polygon points="205.3,974.5 206.5,972.0 207.7,974.5" fill="#333"/>
<rect x="218.6" y="987" width="1.1" height="4.5" fill="#c8c8c8"/>
<path d="M219.1,973.5 v10 M214.1,978.5 h10" stroke="#222" stroke-width="1.2"/><polygon points="219.1,972.0 216.9,975.0 221.29999999999998,975.0" fill="#222"/><polygon points="219.1,985.0 216.9,982.0 221.29999999999998,982.0" fill="#222"/><polygon points="212.6,978.5 215.6,976.3 215.6,980.7" fill="#222"/><polygon points="225.6,978.5 222.6,976.3 222.6,980.7" fill="#222"/>
<rect x="237.6" y="987" width="1.1" height="4.5" fill="#c8c8c8"/>
<path d="M238.1,973.5 v10 M233.1,978.5 h10" stroke="#222" stroke-width="1.2"/><polygon points="238.1,972.0 235.9,975.0 240.29999999999998,975.0" fill="#222"/><polygon points="238.1,985.0 235.9,982.0 240.29999999999998,982.0" fill="#222"/><polygon points="231.6,978.5 234.6,976.3 234.6,980.7" fill="#222"/><polygon points="244.6,978.5 241.6,976.3 241.6,980.7" fill="#222"/>
<rect x="256.7" y="987" width="1.1" height="4.5" fill="#c8c8c8"/>
<path d="M257.2,973.5 v10 M252.2,978.5 h10" stroke="#222" stroke-width="1.2"/><polygon points="257.2,972.0 255.0,975.0 259.4,975.0" fill="#222"/><polygon points="257.2,985.0 255.0,982.0 259.4,982.0" fill="#222"/><polygon points="250.7,978.5 253.7,976.3 253.7,980.7" fill="#222"/><polygon points="263.7,978.5 260.7,976.3 260.7,980.7" fill="#222"/>
<rect x="275.8" y="987" width="1.1" height="4.5" fill="#c8c8c8"/>
<path d="M276.3,973.5 v10 M271.3,978.5 h10" stroke="#222" stroke-width="1.2"/><polygon points="276.3,972.0 274.1,975.0 278.5,975.0" fill="#222"/><polygon points="276.3,985.0 274.1,982.0 278.5,982.0" fill="#222"/><polygon points="269.8,978.5 272.8,976.3 272.8,980.7" fill="#222"/><polygon points="282.8,978.5 279.8,976.3 279.8,980.7" fill="#222"/>
<rect x="294.8" y="987" width="1.1" height="4.5" fill="#c8c8c8"/>
<path d="M289.5,978.0 L294.5,972.5 H298.0 Q301.5,972.5 301.5,977.0 V984.5 H292.0 Q289.5,984.5 289.5,981.0 Z" fill="#dadada" stroke="#9a9a9a" stroke-width="0.8"/><polygon points="289.7,977.8 294.40000000000003,972.7 297.40000000000003,975.8 292.0,980.6" fill="#5aa8e6"/><polygon points="289.8,978.5 292.0,980.8 289.8,982.5" fill="#fafafa"/>
<rect x="313.9" y="987" width="1.1" height="4.5" fill="#c8c8c8"/>
<path d="M308.59999999999997,978.0 L313.59999999999997,972.5 H317.09999999999997 Q320.59999999999997,972.5 320.59999999999997,977.0 V984.5 H311.09999999999997 Q308.59999999999997,984.5 308.59999999999997,981.0 Z" fill="#dadada" stroke="#9a9a9a" stroke-width="0.8"/><polygon points="308.79999999999995,977.8 313.5,972.7 316.5,975.8 311.09999999999997,980.6" fill="#5aa8e6"/><polygon points="308.9,978.5 311.09999999999997,980.8 308.9,982.5" fill="#fafafa"/>
<rect x="333.0" y="987" width="1.1" height="4.5" fill="#c8c8c8"/>
<path d="M327.7,978.0 L332.7,972.5 H336.2 Q339.7,972.5 339.7,977.0 V984.5 H330.2 Q327.7,984.5 327.7,981.0 Z" fill="#dadada" stroke="#9a9a9a" stroke-width="0.8"/><polygon points="327.9,977.8 332.6,972.7 335.6,975.8 330.2,980.6" fill="#5aa8e6"/><polygon points="328.0,978.5 330.2,980.8 328.0,982.5" fill="#fafafa"/>
<rect x="352.0" y="987" width="1.1" height="4.5" fill="#c8c8c8"/>
<path d="M346.7,978.0 L351.7,972.5 H355.2 Q358.7,972.5 358.7,977.0 V984.5 H349.2 Q346.7,984.5 346.7,981.0 Z" fill="#dadada" stroke="#9a9a9a" stroke-width="0.8"/><polygon points="346.9,977.8 351.6,972.7 354.6,975.8 349.2,980.6" fill="#5aa8e6"/><polygon points="347.0,978.5 349.2,980.8 347.0,982.5" fill="#fafafa"/>
<rect x="371.1" y="987" width="1.1" height="4.5" fill="#c8c8c8"/>
<path d="M365.8,978.0 L370.8,972.5 H374.3 Q377.8,972.5 377.8,977.0 V984.5 H368.3 Q365.8,984.5 365.8,981.0 Z" fill="#dadada" stroke="#9a9a9a" stroke-width="0.8"/><polygon points="366.0,977.8 370.70000000000005,972.7 373.70000000000005,975.8 368.3,980.6" fill="#5aa8e6"/><polygon points="366.1,978.5 368.3,980.8 366.1,982.5" fill="#fafafa"/>
<rect x="390.2" y="987" width="1.1" height="4.5" fill="#c8c8c8"/>
<rect x="385.0" y="972.5" width="11.5" height="11.5" fill="#f8f8f8" stroke="#c4c4c4" stroke-width="0.7"/><rect x="384.1" y="971.6" width="1.8" height="1.8" fill="#3d9ae0"/><rect x="395.6" y="971.6" width="1.8" height="1.8" fill="#3d9ae0"/><rect x="384.1" y="983.1" width="1.8" height="1.8" fill="#3d9ae0"/><rect x="395.6" y="983.1" width="1.8" height="1.8" fill="#3d9ae0"/><path d="M388.0,975.5 h5 M388.0,975.5 v5 M393.0,975.5 q0,5 -5,5" stroke="#777" stroke-width="0.6" fill="none"/><circle cx="388.0" cy="975.5" r="0.9" fill="#3d9ae0"/><circle cx="393.0" cy="975.5" r="0.9" fill="#3d9ae0"/><circle cx="388.0" cy="980.5" r="0.9" fill="#3d9ae0"/><path d="M392.0,984.5 l4.5,-4.5" stroke="#f0b030" stroke-width="2.2"/><circle cx="397.1" cy="979.4" r="1.2" fill="#e82828"/><path d="M391.3,985.2 l0.8,-0.8" stroke="#444" stroke-width="1"/>
<rect x="409.3" y="987" width="1.1" height="4.5" fill="#c8c8c8"/>
<path d="M403.3,974.0 h11 l2,-1.5 v10.5 l-2,2 h-11 z" fill="#d8d8d8" stroke="#888" stroke-width="0.9"/><circle cx="409.3" cy="979.2" r="3.3" fill="#5ba7e2"/><path d="M408.3,976.5 l3,2.5" stroke="#fff" stroke-width="1"/>
<rect x="428.3" y="987" width="1.1" height="4.5" fill="#c8c8c8"/>
<path d="M422.3,974.0 h11 l2,-1.5 v10.5 l-2,2 h-11 z" fill="#d8d8d8" stroke="#888" stroke-width="0.9"/><circle cx="428.3" cy="979.2" r="3.3" fill="#5ba7e2"/><path d="M427.3,976.5 l3,2.5" stroke="#fff" stroke-width="1"/>
<rect x="447.4" y="987" width="1.1" height="4.5" fill="#c8c8c8"/>
<path d="M442.09999999999997,978.0 L447.09999999999997,972.5 H450.59999999999997 Q454.09999999999997,972.5 454.09999999999997,977.0 V984.5 H444.59999999999997 Q442.09999999999997,984.5 442.09999999999997,981.0 Z" fill="#dadada" stroke="#9a9a9a" stroke-width="0.8"/><polygon points="442.29999999999995,977.8 447.0,972.7 450.0,975.8 444.59999999999997,980.6" fill="#5aa8e6"/><polygon points="442.4,978.5 444.59999999999997,980.8 442.4,982.5" fill="#fafafa"/>
<rect x="466.5" y="987" width="1.1" height="4.5" fill="#c8c8c8"/>
<rect x="461.3" y="972.5" width="11.5" height="11.5" fill="#f8f8f8" stroke="#c4c4c4" stroke-width="0.7"/><rect x="460.40000000000003" y="971.6" width="1.8" height="1.8" fill="#3d9ae0"/><rect x="471.90000000000003" y="971.6" width="1.8" height="1.8" fill="#3d9ae0"/><rect x="460.40000000000003" y="983.1" width="1.8" height="1.8" fill="#3d9ae0"/><rect x="471.90000000000003" y="983.1" width="1.8" height="1.8" fill="#3d9ae0"/><path d="M464.3,975.5 h5 M464.3,975.5 v5 M469.3,975.5 q0,5 -5,5" stroke="#777" stroke-width="0.6" fill="none"/><circle cx="464.3" cy="975.5" r="0.9" fill="#3d9ae0"/><circle cx="469.3" cy="975.5" r="0.9" fill="#3d9ae0"/><circle cx="464.3" cy="980.5" r="0.9" fill="#3d9ae0"/><path d="M468.3,984.5 l4.5,-4.5" stroke="#f0b030" stroke-width="2.2"/><circle cx="473.40000000000003" cy="979.4" r="1.2" fill="#e82828"/><path d="M467.6,985.2 l0.8,-0.8" stroke="#444" stroke-width="1"/>
<rect x="485.5" y="987" width="1.1" height="4.5" fill="#c8c8c8"/>
<polygon points="479.5,982.5 488.5,982.5 491.0,980.5 491.0,983.0 488.5,985.0 479.5,985.0" fill="#bdbdbd"/><polygon points="479.5,974.5 482.0,972.0 491.0,972.0 488.5,974.5" fill="#8fcaf7"/><polygon points="488.5,974.5 491.0,972.0 491.0,980.5 488.5,983.0" fill="#4592cf"/><rect x="479.5" y="974.5" width="9" height="8.5" fill="#64aee6"/><path d="M492.5,973.5 v10" stroke="#444" stroke-width="0.7"/><polygon points="491.3,974.5 492.5,972.0 493.7,974.5" fill="#333"/>
<rect x="504.6" y="987" width="1.1" height="4.5" fill="#c8c8c8"/>
<polygon points="498.6,982.5 507.6,982.5 510.1,980.5 510.1,983.0 507.6,985.0 498.6,985.0" fill="#bdbdbd"/><polygon points="498.6,974.5 501.1,972.0 510.1,972.0 507.6,974.5" fill="#8fcaf7"/><polygon points="507.6,974.5 510.1,972.0 510.1,980.5 507.6,983.0" fill="#4592cf"/><rect x="498.6" y="974.5" width="9" height="8.5" fill="#64aee6"/><path d="M511.6,973.5 v10" stroke="#444" stroke-width="0.7"/><polygon points="510.40000000000003,974.5 511.6,972.0 512.8000000000001,974.5" fill="#333"/>
<rect x="523.7" y="987" width="1.1" height="4.5" fill="#c8c8c8"/>
<polygon points="517.7,982.5 526.7,982.5 529.2,980.5 529.2,983.0 526.7,985.0 517.7,985.0" fill="#bdbdbd"/><polygon points="517.7,974.5 520.2,972.0 529.2,972.0 526.7,974.5" fill="#8fcaf7"/><polygon points="526.7,974.5 529.2,972.0 529.2,980.5 526.7,983.0" fill="#4592cf"/><rect x="517.7" y="974.5" width="9" height="8.5" fill="#64aee6"/><path d="M530.7,973.5 v10" stroke="#444" stroke-width="0.7"/><polygon points="529.5,974.5 530.7,972.0 531.9000000000001,974.5" fill="#333"/>
<rect x="542.7" y="987" width="1.1" height="4.5" fill="#c8c8c8"/>
<rect x="537.5" y="972.5" width="11.5" height="11.5" fill="#f8f8f8" stroke="#c4c4c4" stroke-width="0.7"/><rect x="536.6" y="971.6" width="1.8" height="1.8" fill="#3d9ae0"/><rect x="548.1" y="971.6" width="1.8" height="1.8" fill="#3d9ae0"/><rect x="536.6" y="983.1" width="1.8" height="1.8" fill="#3d9ae0"/><rect x="548.1" y="983.1" width="1.8" height="1.8" fill="#3d9ae0"/><path d="M540.5,975.5 h5 M540.5,975.5 v5 M545.5,975.5 q0,5 -5,5" stroke="#777" stroke-width="0.6" fill="none"/><circle cx="540.5" cy="975.5" r="0.9" fill="#3d9ae0"/><circle cx="545.5" cy="975.5" r="0.9" fill="#3d9ae0"/><circle cx="540.5" cy="980.5" r="0.9" fill="#3d9ae0"/><path d="M544.5,984.5 l4.5,-4.5" stroke="#f0b030" stroke-width="2.2"/><circle cx="549.6" cy="979.4" r="1.2" fill="#e82828"/><path d="M543.8,985.2 l0.8,-0.8" stroke="#444" stroke-width="1"/>
<rect x="561.8" y="987" width="1.1" height="4.5" fill="#c8c8c8"/>
<polygon points="555.8,982.5 564.8,982.5 567.3,980.5 567.3,983.0 564.8,985.0 555.8,985.0" fill="#bdbdbd"/><polygon points="555.8,974.5 558.3,972.0 567.3,972.0 564.8,974.5" fill="#8fcaf7"/><polygon points="564.8,974.5 567.3,972.0 567.3,980.5 564.8,983.0" fill="#4592cf"/><rect x="555.8" y="974.5" width="9" height="8.5" fill="#64aee6"/><path d="M568.8,973.5 v10" stroke="#444" stroke-width="0.7"/><polygon points="567.5999999999999,974.5 568.8,972.0 570.0,974.5" fill="#333"/>
<rect x="580.9" y="987" width="1.1" height="4.5" fill="#c8c8c8"/>
<polygon points="574.9,982.5 583.9,982.5 586.4,980.5 586.4,983.0 583.9,985.0 574.9,985.0" fill="#bdbdbd"/><polygon points="574.9,974.5 577.4,972.0 586.4,972.0 583.9,974.5" fill="#8fcaf7"/><polygon points="583.9,974.5 586.4,972.0 586.4,980.5 583.9,983.0" fill="#4592cf"/><rect x="574.9" y="974.5" width="9" height="8.5" fill="#64aee6"/><path d="M587.9,973.5 v10" stroke="#444" stroke-width="0.7"/><polygon points="586.6999999999999,974.5 587.9,972.0 589.1,974.5" fill="#333"/>
<rect x="600.0" y="987" width="1.1" height="4.5" fill="#c8c8c8"/>
<polygon points="594.0,982.5 603.0,982.5 605.5,980.5 605.5,983.0 603.0,985.0 594.0,985.0" fill="#bdbdbd"/><polygon points="594.0,974.5 596.5,972.0 605.5,972.0 603.0,974.5" fill="#8fcaf7"/><polygon points="603.0,974.5 605.5,972.0 605.5,980.5 603.0,983.0" fill="#4592cf"/><rect x="594.0" y="974.5" width="9" height="8.5" fill="#64aee6"/><path d="M607.0,973.5 v10" stroke="#444" stroke-width="0.7"/><polygon points="605.8,974.5 607.0,972.0 608.2,974.5" fill="#333"/>
<rect x="619.0" y="987" width="1.1" height="4.5" fill="#c8c8c8"/>
<rect x="613.8" y="972.5" width="11.5" height="11.5" fill="#f8f8f8" stroke="#c4c4c4" stroke-width="0.7"/><rect x="612.9" y="971.6" width="1.8" height="1.8" fill="#3d9ae0"/><rect x="624.4" y="971.6" width="1.8" height="1.8" fill="#3d9ae0"/><rect x="612.9" y="983.1" width="1.8" height="1.8" fill="#3d9ae0"/><rect x="624.4" y="983.1" width="1.8" height="1.8" fill="#3d9ae0"/><path d="M616.8,975.5 h5 M616.8,975.5 v5 M621.8,975.5 q0,5 -5,5" stroke="#777" stroke-width="0.6" fill="none"/><circle cx="616.8" cy="975.5" r="0.9" fill="#3d9ae0"/><circle cx="621.8" cy="975.5" r="0.9" fill="#3d9ae0"/><circle cx="616.8" cy="980.5" r="0.9" fill="#3d9ae0"/><path d="M620.8,984.5 l4.5,-4.5" stroke="#f0b030" stroke-width="2.2"/><circle cx="625.9" cy="979.4" r="1.2" fill="#e82828"/><path d="M620.0999999999999,985.2 l0.8,-0.8" stroke="#444" stroke-width="1"/>
<rect x="638.1" y="987" width="1.1" height="4.5" fill="#c8c8c8"/>
<path d="M632.1,974.0 h11 l2,-1.5 v10.5 l-2,2 h-11 z" fill="#d8d8d8" stroke="#888" stroke-width="0.9"/><circle cx="638.1" cy="979.2" r="3.3" fill="#5ba7e2"/><path d="M637.1,976.5 l3,2.5" stroke="#fff" stroke-width="1"/>
<rect x="657.2" y="987" width="1.1" height="4.5" fill="#c8c8c8"/>
<path d="M651.2,974.0 h11 l2,-1.5 v10.5 l-2,2 h-11 z" fill="#d8d8d8" stroke="#888" stroke-width="0.9"/><circle cx="657.2" cy="979.2" r="3.3" fill="#5ba7e2"/><path d="M656.2,976.5 l3,2.5" stroke="#fff" stroke-width="1"/>
<rect x="676.2" y="987" width="1.1" height="4.5" fill="#c8c8c8"/>
<rect x="671.0" y="972.5" width="11.5" height="11.5" fill="#f8f8f8" stroke="#c4c4c4" stroke-width="0.7"/><rect x="670.1" y="971.6" width="1.8" height="1.8" fill="#3d9ae0"/><rect x="681.6" y="971.6" width="1.8" height="1.8" fill="#3d9ae0"/><rect x="670.1" y="983.1" width="1.8" height="1.8" fill="#3d9ae0"/><rect x="681.6" y="983.1" width="1.8" height="1.8" fill="#3d9ae0"/><path d="M674.0,975.5 h5 M674.0,975.5 v5 M679.0,975.5 q0,5 -5,5" stroke="#777" stroke-width="0.6" fill="none"/><circle cx="674.0" cy="975.5" r="0.9" fill="#3d9ae0"/><circle cx="679.0" cy="975.5" r="0.9" fill="#3d9ae0"/><circle cx="674.0" cy="980.5" r="0.9" fill="#3d9ae0"/><path d="M678.0,984.5 l4.5,-4.5" stroke="#f0b030" stroke-width="2.2"/><circle cx="683.1" cy="979.4" r="1.2" fill="#e82828"/><path d="M677.3,985.2 l0.8,-0.8" stroke="#444" stroke-width="1"/>
<rect x="695.3" y="987" width="1.1" height="4.5" fill="#c8c8c8"/>
<path d="M689.3,974.0 h11 l2,-1.5 v10.5 l-2,2 h-11 z" fill="#d8d8d8" stroke="#888" stroke-width="0.9"/><circle cx="695.3" cy="979.2" r="3.3" fill="#5ba7e2"/><path d="M694.3,976.5 l3,2.5" stroke="#fff" stroke-width="1"/>
<rect x="714.4" y="987" width="1.1" height="4.5" fill="#c8c8c8"/>
<path d="M708.4,974.0 h11 l2,-1.5 v10.5 l-2,2 h-11 z" fill="#d8d8d8" stroke="#888" stroke-width="0.9"/><circle cx="714.4" cy="979.2" r="3.3" fill="#5ba7e2"/><path d="M713.4,976.5 l3,2.5" stroke="#fff" stroke-width="1"/>
<rect x="733.4" y="987" width="1.1" height="4.5" fill="#c8c8c8"/>
<path d="M728.1,978.0 L733.1,972.5 H736.6 Q740.1,972.5 740.1,977.0 V984.5 H730.6 Q728.1,984.5 728.1,981.0 Z" fill="#dadada" stroke="#9a9a9a" stroke-width="0.8"/><polygon points="728.3,977.8 733.0,972.7 736.0,975.8 730.6,980.6" fill="#5aa8e6"/><polygon points="728.4,978.5 730.6,980.8 728.4,982.5" fill="#fafafa"/>
<rect x="752.5" y="987" width="1.1" height="4.5" fill="#c8c8c8"/>
<path d="M747.2,978.0 L752.2,972.5 H755.7 Q759.2,972.5 759.2,977.0 V984.5 H749.7 Q747.2,984.5 747.2,981.0 Z" fill="#dadada" stroke="#9a9a9a" stroke-width="0.8"/><polygon points="747.4,977.8 752.1,972.7 755.1,975.8 749.7,980.6" fill="#5aa8e6"/><polygon points="747.5,978.5 749.7,980.8 747.5,982.5" fill="#fafafa"/>
<rect x="771.6" y="987" width="1.1" height="4.5" fill="#c8c8c8"/>
<rect x="766.6" y="972.0" width="5.5" height="7" rx="1" fill="#ddd" stroke="#888" stroke-width="0.8"/><rect x="772.1" y="977.5" width="5.5" height="7" rx="1" fill="#ddd" stroke="#888" stroke-width="0.8"/><path d="M768.1,980.0 v3 h3" stroke="#3d95dc" stroke-width="0.9" fill="none"/>
<rect x="790.7" y="987" width="1.1" height="4.5" fill="#c8c8c8"/>
<path d="M791.2,973.5 v10 M786.2,978.5 h10" stroke="#222" stroke-width="1.2"/><polygon points="791.2,972.0 789.0,975.0 793.4000000000001,975.0" fill="#222"/><polygon points="791.2,985.0 789.0,982.0 793.4000000000001,982.0" fill="#222"/><polygon points="784.7,978.5 787.7,976.3 787.7,980.7" fill="#222"/><polygon points="797.7,978.5 794.7,976.3 794.7,980.7" fill="#222"/>
<rect x="809.7" y="987" width="1.1" height="4.5" fill="#c8c8c8"/>
<path d="M810.2,973.5 v10 M805.2,978.5 h10" stroke="#222" stroke-width="1.2"/><polygon points="810.2,972.0 808.0,975.0 812.4000000000001,975.0" fill="#222"/><polygon points="810.2,985.0 808.0,982.0 812.4000000000001,982.0" fill="#222"/><polygon points="803.7,978.5 806.7,976.3 806.7,980.7" fill="#222"/><polygon points="816.7,978.5 813.7,976.3 813.7,980.7" fill="#222"/>
<rect x="828.8" y="987" width="1.1" height="4.5" fill="#c8c8c8"/>
<path d="M829.3,973.5 v10 M824.3,978.5 h10" stroke="#222" stroke-width="1.2"/><polygon points="829.3,972.0 827.0999999999999,975.0 831.5,975.0" fill="#222"/><polygon points="829.3,985.0 827.0999999999999,982.0 831.5,982.0" fill="#222"/><polygon points="822.8,978.5 825.8,976.3 825.8,980.7" fill="#222"/><polygon points="835.8,978.5 832.8,976.3 832.8,980.7" fill="#222"/>
<rect x="847.9" y="987" width="1.1" height="4.5" fill="#c8c8c8"/>
<path d="M848.4,973.5 v10 M843.4,978.5 h10" stroke="#222" stroke-width="1.2"/><polygon points="848.4,972.0 846.1999999999999,975.0 850.6,975.0" fill="#222"/><polygon points="848.4,985.0 846.1999999999999,982.0 850.6,982.0" fill="#222"/><polygon points="841.9,978.5 844.9,976.3 844.9,980.7" fill="#222"/><polygon points="854.9,978.5 851.9,976.3 851.9,980.7" fill="#222"/>
<rect x="866.9" y="987" width="1.1" height="4.5" fill="#c8c8c8"/>
<path d="M867.4,973.5 v10 M862.4,978.5 h10" stroke="#222" stroke-width="1.2"/><polygon points="867.4,972.0 865.1999999999999,975.0 869.6,975.0" fill="#222"/><polygon points="867.4,985.0 865.1999999999999,982.0 869.6,982.0" fill="#222"/><polygon points="860.9,978.5 863.9,976.3 863.9,980.7" fill="#222"/><polygon points="873.9,978.5 870.9,976.3 870.9,980.7" fill="#222"/>
<rect x="886.0" y="987" width="1.1" height="4.5" fill="#c8c8c8"/>
<path d="M880.0,985.0 v-9 l3,-3 h2 v9 l-3,3 z" fill="#e0e0e0" stroke="#888" stroke-width="0.7"/><polygon points="884.0,976.0 887.0,973.0 887.0,982.0 884.0,985.0" fill="#5cc27a"/><polygon points="889.0,976.0 892.5,972.5 892.5,981.5 889.0,985.0" fill="#e6955c"/>
<rect x="905.1" y="987" width="1.1" height="4.5" fill="#c8c8c8"/>
<rect x="899.9" y="972.5" width="11.5" height="11.5" fill="#f8f8f8" stroke="#c4c4c4" stroke-width="0.7"/><rect x="899.0" y="971.6" width="1.8" height="1.8" fill="#3d9ae0"/><rect x="910.5" y="971.6" width="1.8" height="1.8" fill="#3d9ae0"/><rect x="899.0" y="983.1" width="1.8" height="1.8" fill="#3d9ae0"/><rect x="910.5" y="983.1" width="1.8" height="1.8" fill="#3d9ae0"/><path d="M902.9,975.5 h5 M902.9,975.5 v5 M907.9,975.5 q0,5 -5,5" stroke="#777" stroke-width="0.6" fill="none"/><circle cx="902.9" cy="975.5" r="0.9" fill="#3d9ae0"/><circle cx="907.9" cy="975.5" r="0.9" fill="#3d9ae0"/><circle cx="902.9" cy="980.5" r="0.9" fill="#3d9ae0"/><path d="M906.9,984.5 l4.5,-4.5" stroke="#f0b030" stroke-width="2.2"/><circle cx="912.0" cy="979.4" r="1.2" fill="#e82828"/><path d="M906.1999999999999,985.2 l0.8,-0.8" stroke="#444" stroke-width="1"/>
<rect x="924.1" y="987" width="1.1" height="4.5" fill="#c8c8c8"/>
<polygon points="918.1,982.5 927.1,982.5 929.6,980.5 929.6,983.0 927.1,985.0 918.1,985.0" fill="#bdbdbd"/><polygon points="918.1,974.5 920.6,972.0 929.6,972.0 927.1,974.5" fill="#8fcaf7"/><polygon points="927.1,974.5 929.6,972.0 929.6,980.5 927.1,983.0" fill="#4592cf"/><rect x="918.1" y="974.5" width="9" height="8.5" fill="#64aee6"/><path d="M931.1,973.5 v10" stroke="#444" stroke-width="0.7"/><polygon points="929.9,974.5 931.1,972.0 932.3000000000001,974.5" fill="#333"/>
<rect x="943.2" y="987" width="1.1" height="4.5" fill="#c8c8c8"/>
<path d="M943.7,973.5 v10 M938.7,978.5 h10" stroke="#222" stroke-width="1.2"/><polygon points="943.7,972.0 941.5,975.0 945.9000000000001,975.0" fill="#222"/><polygon points="943.7,985.0 941.5,982.0 945.9000000000001,982.0" fill="#222"/><polygon points="937.2,978.5 940.2,976.3 940.2,980.7" fill="#222"/><polygon points="950.2,978.5 947.2,976.3 947.2,980.7" fill="#222"/>
<rect x="962.3" y="987" width="1.1" height="4.5" fill="#c8c8c8"/>
<path d="M957.0,978.0 L962.0,972.5 H965.5 Q969.0,972.5 969.0,977.0 V984.5 H959.5 Q957.0,984.5 957.0,981.0 Z" fill="#dadada" stroke="#9a9a9a" stroke-width="0.8"/><polygon points="957.1999999999999,977.8 961.9,972.7 964.9,975.8 959.5,980.6" fill="#5aa8e6"/><polygon points="957.3,978.5 959.5,980.8 957.3,982.5" fill="#fafafa"/>
<rect x="981.4" y="987" width="1.1" height="4.5" fill="#c8c8c8"/>
<path d="M976.1,978.0 L981.1,972.5 H984.6 Q988.1,972.5 988.1,977.0 V984.5 H978.6 Q976.1,984.5 976.1,981.0 Z" fill="#dadada" stroke="#9a9a9a" stroke-width="0.8"/><polygon points="976.3,977.8 981.0,972.7 984.0,975.8 978.6,980.6" fill="#5aa8e6"/><polygon points="976.4,978.5 978.6,980.8 976.4,982.5" fill="#fafafa"/>
<rect x="1000.4" y="987" width="1.1" height="4.5" fill="#c8c8c8"/>
<path d="M995.1,978.0 L1000.1,972.5 H1003.6 Q1007.1,972.5 1007.1,977.0 V984.5 H997.6 Q995.1,984.5 995.1,981.0 Z" fill="#dadada" stroke="#9a9a9a" stroke-width="0.8"/><polygon points="995.3,977.8 1000.0,972.7 1003.0,975.8 997.6,980.6" fill="#5aa8e6"/><polygon points="995.4,978.5 997.6,980.8 995.4,982.5" fill="#fafafa"/>
<rect x="1019.5" y="987" width="1.1" height="4.5" fill="#c8c8c8"/>
<path d="M1014.2,978.0 L1019.2,972.5 H1022.7 Q1026.2,972.5 1026.2,977.0 V984.5 H1016.7 Q1014.2,984.5 1014.2,981.0 Z" fill="#dadada" stroke="#9a9a9a" stroke-width="0.8"/><polygon points="1014.4,977.8 1019.1,972.7 1022.1,975.8 1016.7,980.6" fill="#5aa8e6"/><polygon points="1014.5,978.5 1016.7,980.8 1014.5,982.5" fill="#fafafa"/>
<rect x="1038.6" y="987" width="1.1" height="4.5" fill="#c8c8c8"/>
<rect x="1033.3999999999999" y="972.5" width="11.5" height="11.5" fill="#f8f8f8" stroke="#c4c4c4" stroke-width="0.7"/><rect x="1032.4999999999998" y="971.6" width="1.8" height="1.8" fill="#3d9ae0"/><rect x="1043.9999999999998" y="971.6" width="1.8" height="1.8" fill="#3d9ae0"/><rect x="1032.4999999999998" y="983.1" width="1.8" height="1.8" fill="#3d9ae0"/><rect x="1043.9999999999998" y="983.1" width="1.8" height="1.8" fill="#3d9ae0"/><path d="M1036.3999999999999,975.5 h5 M1036.3999999999999,975.5 v5 M1041.3999999999999,975.5 q0,5 -5,5" stroke="#777" stroke-width="0.6" fill="none"/><circle cx="1036.3999999999999" cy="975.5" r="0.9" fill="#3d9ae0"/><circle cx="1041.3999999999999" cy="975.5" r="0.9" fill="#3d9ae0"/><circle cx="1036.3999999999999" cy="980.5" r="0.9" fill="#3d9ae0"/><path d="M1040.3999999999999,984.5 l4.5,-4.5" stroke="#f0b030" stroke-width="2.2"/><circle cx="1045.4999999999998" cy="979.4" r="1.2" fill="#e82828"/><path d="M1039.6999999999998,985.2 l0.8,-0.8" stroke="#444" stroke-width="1"/>
<rect x="1057.6" y="987" width="1.1" height="4.5" fill="#c8c8c8"/>
<polygon points="1051.6,982.5 1060.6,982.5 1063.1,980.5 1063.1,983.0 1060.6,985.0 1051.6,985.0" fill="#bdbdbd"/><polygon points="1051.6,974.5 1054.1,972.0 1063.1,972.0 1060.6,974.5" fill="#8fcaf7"/><polygon points="1060.6,974.5 1063.1,972.0 1063.1,980.5 1060.6,983.0" fill="#4592cf"/><rect x="1051.6" y="974.5" width="9" height="8.5" fill="#64aee6"/><path d="M1064.6,973.5 v10" stroke="#444" stroke-width="0.7"/><polygon points="1063.3999999999999,974.5 1064.6,972.0 1065.8,974.5" fill="#333"/>
<rect x="1076.7" y="987" width="1.1" height="4.5" fill="#c8c8c8"/>
<rect x="1071.5" y="972.5" width="11.5" height="11.5" fill="#f8f8f8" stroke="#c4c4c4" stroke-width="0.7"/><rect x="1070.6" y="971.6" width="1.8" height="1.8" fill="#3d9ae0"/><rect x="1082.1" y="971.6" width="1.8" height="1.8" fill="#3d9ae0"/><rect x="1070.6" y="983.1" width="1.8" height="1.8" fill="#3d9ae0"/><rect x="1082.1" y="983.1" width="1.8" height="1.8" fill="#3d9ae0"/><path d="M1074.5,975.5 h5 M1074.5,975.5 v5 M1079.5,975.5 q0,5 -5,5" stroke="#777" stroke-width="0.6" fill="none"/><circle cx="1074.5" cy="975.5" r="0.9" fill="#3d9ae0"/><circle cx="1079.5" cy="975.5" r="0.9" fill="#3d9ae0"/><circle cx="1074.5" cy="980.5" r="0.9" fill="#3d9ae0"/><path d="M1078.5,984.5 l4.5,-4.5" stroke="#f0b030" stroke-width="2.2"/><circle cx="1083.6" cy="979.4" r="1.2" fill="#e82828"/><path d="M1077.8,985.2 l0.8,-0.8" stroke="#444" stroke-width="1"/>
<rect x="1095.8" y="987" width="1.1" height="4.5" fill="#c8c8c8"/>
<rect x="1090.6" y="972.5" width="11.5" height="11.5" fill="#f8f8f8" stroke="#c4c4c4" stroke-width="0.7"/><rect x="1089.6999999999998" y="971.6" width="1.8" height="1.8" fill="#3d9ae0"/><rect x="1101.1999999999998" y="971.6" width="1.8" height="1.8" fill="#3d9ae0"/><rect x="1089.6999999999998" y="983.1" width="1.8" height="1.8" fill="#3d9ae0"/><rect x="1101.1999999999998" y="983.1" width="1.8" height="1.8" fill="#3d9ae0"/><path d="M1093.6,975.5 h5 M1093.6,975.5 v5 M1098.6,975.5 q0,5 -5,5" stroke="#777" stroke-width="0.6" fill="none"/><circle cx="1093.6" cy="975.5" r="0.9" fill="#3d9ae0"/><circle cx="1098.6" cy="975.5" r="0.9" fill="#3d9ae0"/><circle cx="1093.6" cy="980.5" r="0.9" fill="#3d9ae0"/><path d="M1097.6,984.5 l4.5,-4.5" stroke="#f0b030" stroke-width="2.2"/><circle cx="1102.6999999999998" cy="979.4" r="1.2" fill="#e82828"/><path d="M1096.8999999999999,985.2 l0.8,-0.8" stroke="#444" stroke-width="1"/>
<polygon points="1134.67,983.33 1132.07,984.72 1131.78,987.65 1128.96,986.81 1126.67,988.67 1125.28,986.07 1122.35,985.78 1123.19,982.96 1121.33,980.67 1123.93,979.28 1124.22,976.35 1127.04,977.19 1129.33,975.33 1130.72,977.93 1133.65,978.22 1132.81,981.04" fill="#777"/><circle cx="1128" cy="982" r="2.3" fill="#f0f0f0"/>
<circle cx="229.6" cy="946.2" r="3.7" fill="#222"/><path d="M229.6,943.6 L230.2,945.6 L232.2,946.2 L230.2,946.8 L229.6,948.8 L229,946.8 L227,946.2 L229,945.6 Z" fill="#f4f4f4"/>
</svg>
<!-- nav bar -->
<div class="a" style="left:479px;top:935px;width:187px;height:20px;background:#eeeeee"></div>
<div class="a" style="left:526px;top:935px;width:21px;height:20px;background:#0696d7"></div>
<svg class="a" style="left:0;top:0;z-index:6" width="1146" height="1000" viewBox="0 0 1146 1000">
<path d="M488,938 v13" stroke="#555" stroke-width="2.2"/><path d="M488,938.5 v12" stroke="#eee" stroke-width="0.8"/>
<path d="M482,945.5 q5,-3 11,-0.5 q1,3 -5,4 q-3,0 -5,-1" stroke="#333" stroke-width="1.1" fill="none"/><polygon points="481,948 484,946.5 484,950" fill="#222"/>
<polygon points="498,943.2 503,943.2 500.5,946.4" fill="#222"/>
<rect x="508" y="942" width="13" height="9" rx="1.5" fill="#f4f4f4" stroke="#777" stroke-width="1.2"/><rect x="510.5" y="944.5" width="8" height="3.8" fill="#9aa4b4" stroke="#666" stroke-width="0.6"/><path d="M510,941.5 l3,-2.5 M515,941.5 l4,-3" stroke="#777" stroke-width="1.2"/>
<path d="M531.5,947 l-2,-2.5 q-1,-1 0,-1.5 q1,-0.5 2,0.5 l1,1.2 v-5.5 q0,-1 1,-1 q1,0 1,1 v3 v-4.5 q0,-1 1,-1 q1,0 1,1 v4.5 v-4 q0,-1 1,-1 q1,0 1,1 v4.5 v-3 q0,-1 1,-1 q1,0 1,1 v6 q0,4 -4,4.5 h-2 q-2,0 -3,-1.7 z" fill="#fff" stroke="#333" stroke-width="0.7"/>
<circle cx="554" cy="944.5" r="3.8" fill="#dff0f2" stroke="#444" stroke-width="1.2"/><path d="M556.8,947.3 l3.5,3.5" stroke="#333" stroke-width="2"/><path d="M558.5,940 h3.5 M560.2,938.3 v3.5 M558.5,942.8 h3.5" stroke="#444" stroke-width="0.8"/>
<circle cx="575.5" cy="944" r="4.6" fill="#dff0f2" stroke="#555" stroke-width="1.1"/><path d="M579,947.5 l3.5,3.5" stroke="#333" stroke-width="2"/><path d="M581.5,938.5 v10 M570,951.5 h9" stroke="#888" stroke-width="0.7" stroke-dasharray="1,1.2"/>
<polygon points="586.7,943.2 591.7,943.2 589.2,946.4" fill="#222"/>
<rect x="596.5" y="938.5" width="12.5" height="10" rx="1" fill="#8fb0dc" stroke="#666" stroke-width="1.2"/><path d="M600.5,949 v1.5 h5 v-1.5" stroke="#777" stroke-width="1" fill="#ddd"/>
<polygon points="611,943.2 616,943.2 613.5,946.4" fill="#222"/>
<rect x="621" y="938.8" width="12.5" height="12.5" rx="1" fill="#d8d8d8" stroke="#777" stroke-width="0.9"/>
<path d="M623.5,939 v12 M621,941.5 h12.5 M626.0,939 v12 M621,944.0 h12.5 M628.5,939 v12 M621,946.5 h12.5 M631.0,939 v12 M621,949.0 h12.5 " stroke="#777" stroke-width="0.6"/>
<polygon points="636,943.2 641,943.2 638.5,946.4" fill="#222"/>
<rect x="645.3" y="939" width="12" height="11.5" rx="1.2" fill="#7fa0d4" stroke="#5a74a8" stroke-width="1"/><path d="M651.3,939 v11.5 M645.3,944.8 h12" stroke="#eef" stroke-width="0.9"/>
<polygon points="660,943.2 665,943.2 662.5,946.4" fill="#222"/>
<defs><linearGradient id="gVc" x1="0" y1="0" x2="0" y2="1"><stop offset="0" stop-color="#f0f0f0"/><stop offset="1" stop-color="#d8d8d8"/></linearGradient><radialGradient id="gSh" cx="0.5" cy="0.5" r="0.5"><stop offset="0" stop-color="#bbb" stop-opacity="0.7"/><stop offset="1" stop-color="#ddd" stop-opacity="0"/></radialGradient></defs>
<ellipse cx="1094" cy="190" rx="30" ry="5" fill="url(#gSh)"/>
<polygon points="1068,149.5 1093.8,149.5 1093.8,193 1068,186.5" fill="url(#gVc)"/>
<polygon points="1093.8,149.5 1121,149.5 1121,186.5 1093.8,193" fill="url(#gVc)"/>
<path d="M1068,149.5 h53 v37 l-27.2,6.5 M1093.8,149.5 v43.5" stroke="#7a7a7a" stroke-width="0.9" stroke-dasharray="3,1.8" fill="none"/>
<rect x="1089" y="158.5" width="10" height="24" fill="#e2e4e8"/>
<path d="M1093.8,149.5 v43.5" stroke="#7a7a7a" stroke-width="0.9" stroke-dasharray="3,1.8"/>
<text transform="translate(1072,172.5) skewY(9) scale(0.53,1)" font-size="10.5" fill="#8a8a8a" font-family="Liberation Sans">FRONT</text>
<text transform="translate(1099.8,175) skewY(-7) scale(0.52,1)" font-size="10.5" fill="#8a8a8a" font-family="Liberation Sans">RIGHT</text>
<path d="M1068,144.5 v42.5" stroke="#6a6af0" stroke-width="1.3"/>
<path d="M1068,187 l32,9" stroke="#f08080" stroke-width="1.3"/>
<text x="1067.3" y="142" font-size="11.5" fill="#6a6af0" text-anchor="middle" font-family="Liberation Sans">Z</text>
<text x="1103.5" y="201" font-size="8.5" fill="#f07070" text-anchor="middle" font-family="Liberation Sans">X</text>
</svg>
<svg class="a" style="left:0;top:0" width="1146" height="1000" viewBox="0 0 1146 1000">
<defs>
<linearGradient id="gInL" x1="209" y1="0" x2="299" y2="0" gradientUnits="userSpaceOnUse">
<stop offset="0" stop-color="#9a7d4a"/><stop offset="0.35" stop-color="#b3925a"/><stop offset="1" stop-color="#c9a462"/></linearGradient>
<linearGradient id="gBack" x1="352" y1="0" x2="451" y2="0" gradientUnits="userSpaceOnUse">
<stop offset="0" stop-color="#d2ab63"/><stop offset="0.55" stop-color="#c9a35e"/><stop offset="1" stop-color="#8c7245"/></linearGradient>
<linearGradient id="gInR" x1="472" y1="0" x2="512" y2="0" gradientUnits="userSpaceOnUse">
<stop offset="0" stop-color="#a98a51"/><stop offset="1" stop-color="#b59456"/></linearGradient>
<linearGradient id="gCurve" x1="512" y1="0" x2="562" y2="0" gradientUnits="userSpaceOnUse">
<stop offset="0" stop-color="#ab8b50"/><stop offset="0.35" stop-color="#c0a05e"/><stop offset="0.65" stop-color="#c9a762"/><stop offset="1" stop-color="#b99857"/></linearGradient>
<linearGradient id="gBar" x1="562" y1="0" x2="1012" y2="0" gradientUnits="userSpaceOnUse">
<stop offset="0" stop-color="#bf9b58"/><stop offset="0.07" stop-color="#c9a45e"/><stop offset="0.13" stop-color="#cfa860"/><stop offset="1" stop-color="#cda760"/></linearGradient>
<radialGradient id="gHole" cx="0.3" cy="0.3" r="0.9">
<stop offset="0" stop-color="#4a3b22"/><stop offset="0.6" stop-color="#6b5631"/><stop offset="1" stop-color="#b39559"/></radialGradient>
</defs>
<filter id="fSh" x="-10%" y="-50%" width="120%" height="200%"><feGaussianBlur stdDeviation="1.6"/></filter>
<polyline points="1012,688 1114,676 1118,676" fill="none" stroke="#c8c8c8" stroke-width="3" filter="url(#fSh)" opacity="0.45"/>
<polygon points="174.1,492.4 190,491.6 190.5,490.7 260,482.4 298,478.3 341,478.3 351.6,479.5 425,471.2 486.7,463.3 525,462.5 563.3,464.2 716,483.7 1112.5,535.6 1112.5,674.2 1011.7,685.9 716,647 562,627 525,626.7 512.5,627 472.5,631.3 471.7,639 466.7,641.3 369.7,652.5 359.5,653 345,654.2 284.2,654.5 253,650.3 253,625.8 209.5,630.3 209,644 204.2,644.2 173.5,640" fill="#cbaa70"/>
<polygon points="194.9,494 260,485.8 298,481.2 299.3,513 253.3,512.3 253,625.8 209.5,630.3 209,503.6 194.5,500.7" fill="url(#gInL)"/>
<polygon points="298,481.2 352.4,481.2 352.4,512.7 299.3,513.1" fill="#cfa862"/>
<polygon points="352.4,481.2 451.5,495.2 450.5,501.5 352.4,512.7" fill="url(#gBack)"/>
<polygon points="173.3,501.3 204,505.2 204.2,644.2 173.5,640" fill="#cea760"/>
<polygon points="204,505.2 209,503.6 209,644 204.2,644.2" fill="#c5a05c"/>
<polygon points="253.3,514 284,516 284.2,654.5 253,650.3" fill="#cda65f"/>
<polygon points="284,516 354.5,516.4 354.5,654.2 284.2,654.5" fill="#d5ae65"/>
<polygon points="354.5,516.4 359.4,515.8 359.5,653 354.5,654.2" fill="#c8a25d"/>
<polygon points="359.4,515.8 369.8,514.5 369.7,652.5 359.5,653" fill="#d0aa62"/>
<polygon points="369.8,514.5 465.6,503.5 466.7,641.3 369.7,652.5" fill="#c09c5a"/>
<polygon points="465.6,503.5 471.8,497 471.7,639 466.7,641.3" fill="#c9a560"/>
<polygon points="471.8,496 512.5,488.7 512.5,627 472.5,631.3" fill="url(#gInR)"/>
<polygon points="512.5,488.6 525,487.6 540,487.1 552,487.6 562,488.9 562,627 525,626.7 512.5,627" fill="url(#gCurve)"/>
<polygon points="562,488.7 1011.7,547.5 1011.7,685.9 716,647 562,627" fill="url(#gBar)"/>
<polygon points="1011.7,547.5 1112.5,535.3 1112,552.5 1031.3,560.8" fill="#d9b168"/>
<polygon points="1011.7,547.5 1031.3,560.8 1031.3,672.5 1011.7,685.9" fill="#d6ae66"/>
<polygon points="1011.7,685.9 1031.3,672.5 1112,663 1112.5,674.2" fill="#a88b52"/>
<polygon points="1031.3,560.8 1112,552.5 1112,663 1031.3,672.5" fill="#c19c5b"/>
<ellipse cx="948.6" cy="608.5" rx="8.3" ry="12.2" fill="url(#gHole)" stroke="#2e2414" stroke-width="1" transform="rotate(-6 948.6 608.5)"/>
<ellipse cx="996.9" cy="614.9" rx="8.5" ry="12" fill="url(#gHole)" stroke="#2e2414" stroke-width="1" transform="rotate(-6 996.9 614.9)" opacity="0.85"/>
<polyline points="174.1,492.4 190,491.6 190.5,490.7 260,482.4 298,478.3 341,478.3 351.6,479.5 425,471.2 486.7,463.3 525,462.5 563.3,464.2 716,483.7 1112.5,535.6 1112.5,674.2 1011.7,685.9 716,647 562,627 525,626.7 512.5,627 472.5,631.3 471.7,639 466.7,641.3 369.7,652.5 359.5,653 345,654.2 284.2,654.5 253,650.3 253,625.8 209.5,630.3 209,644 204.2,644.2 173.5,640 174.1,492.4" fill="none" stroke="#2a2212" stroke-width="1" stroke-linejoin="round"/>
<polyline points="173.3,501.3 204,505.2 209,503.6" fill="none" stroke="#2a2212" stroke-width="1" stroke-linejoin="round"/>
<polyline points="204,505.2 204.2,644.2" fill="none" stroke="#2a2212" stroke-width="1" stroke-linejoin="round"/>
<polyline points="209,503.6 209,644" fill="none" stroke="#2a2212" stroke-width="1" stroke-linejoin="round"/>
<polyline points="194.9,494 260,485.8 298,481.2 352.4,481.2 451.5,495.2 450.5,501.5 352.4,512.7" fill="none" stroke="#2a2212" stroke-width="1" stroke-linejoin="round"/>
<polyline points="194.9,494 194.5,500.7 209,503" fill="none" stroke="#2a2212" stroke-width="1" stroke-linejoin="round"/>
<polyline points="299.3,481.2 299.3,513" fill="none" stroke="#2a2212" stroke-width="1" stroke-linejoin="round"/>
<polyline points="352.4,481.2 352.4,512.7" fill="none" stroke="#2a2212" stroke-width="1" stroke-linejoin="round"/>
<polyline points="253.3,512.3 284.8,513.1 352.4,512.7" fill="none" stroke="#2a2212" stroke-width="1" stroke-linejoin="round"/>
<polyline points="253.3,514 284,516 354.5,516.4 359.4,515.8 369.8,514.5 465.6,503.5 469,501.5 471.8,497" fill="none" stroke="#2a2212" stroke-width="1" stroke-linejoin="round"/>
<polyline points="253.3,512.3 253,650.3" fill="none" stroke="#2a2212" stroke-width="1" stroke-linejoin="round"/>
<polyline points="284,516 284.2,654.5" fill="none" stroke="#2a2212" stroke-width="1" stroke-linejoin="round"/>
<polyline points="354.5,516.4 354.5,654.2" fill="none" stroke="#2a2212" stroke-width="1" stroke-linejoin="round"/>
<polyline points="359.4,515.8 359.5,653" fill="none" stroke="#2a2212" stroke-width="1" stroke-linejoin="round"/>
<polyline points="369.8,514.5 369.7,652.5" fill="none" stroke="#2a2212" stroke-width="1" stroke-linejoin="round"/>
<polyline points="465.6,503.5 466.7,641.3" fill="none" stroke="#2a2212" stroke-width="1" stroke-linejoin="round"/>
<polyline points="465.6,495.2 469,494.8 473,494 512.5,488.6 525,487.6 540,487.1 552,487.6 562,488.9 1011.7,547.5 1112,535.5" fill="none" stroke="#2a2212" stroke-width="1" stroke-linejoin="round"/>
<polyline points="512.5,488.7 512.5,627" fill="none" stroke="#2a2212" stroke-width="1" stroke-linejoin="round"/>
<polyline points="562,489 562,627" fill="none" stroke="#2a2212" stroke-width="1" stroke-linejoin="round"/>
<polyline points="1011.7,547.5 1011.7,685.9" fill="none" stroke="#2a2212" stroke-width="1" stroke-linejoin="round"/>
<polyline points="1011.7,547.5 1031.3,560.8 1112,552.5" fill="none" stroke="#2a2212" stroke-width="1" stroke-linejoin="round"/>
<polyline points="1031.3,560.8 1031.3,672.5 1112,663" fill="none" stroke="#2a2212" stroke-width="1" stroke-linejoin="round"/>
<polyline points="1031.3,672.5 1011.7,685.9" fill="none" stroke="#2a2212" stroke-width="1" stroke-linejoin="round"/>
<polyline points="471.8,497 471.8,639" fill="none" stroke="#1a140a" stroke-width="1.8"/>
</svg>
</body></html>
